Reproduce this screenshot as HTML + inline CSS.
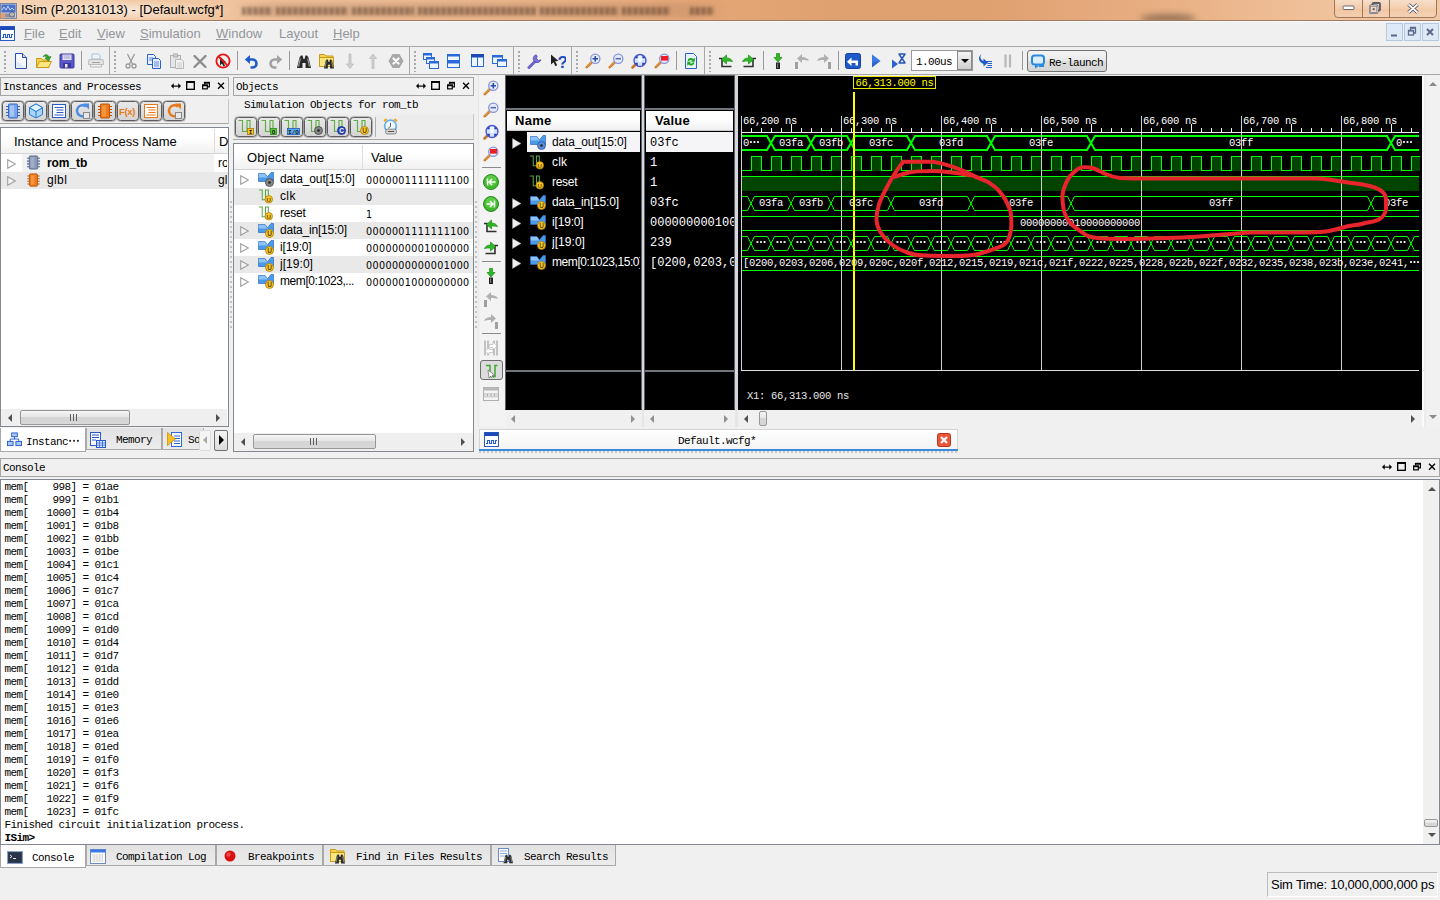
<!DOCTYPE html><html><head><meta charset="utf-8"><title>ISim</title><style>
*{box-sizing:border-box}
html,body{margin:0;padding:0}
body{width:1440px;height:900px;position:relative;overflow:hidden;background:#f0f0f0;font-family:"Liberation Sans",sans-serif;font-size:13px;color:#000;line-height:16px}
.a{position:absolute}
.sim{font-family:"Liberation Mono","Noto Sans CJK SC",monospace;font-size:11px;letter-spacing:-0.6px;white-space:pre;line-height:12px}
.ui{font-family:"Liberation Sans",sans-serif;font-size:13px;white-space:pre;line-height:16px}
.box{border:1px solid #a5a5a5;background:#f0f0f0}
.wh{background:#fff;border:1px solid #828790}
.menu span{position:absolute;top:4px;color:#93969b;font-size:13px}
.tb{width:22px;height:20px;border:1px solid #5c5c5c;border-radius:3.5px;background:linear-gradient(#e8e8e8,#d4d4d4);box-shadow:0 0 0 .6px #8a8a8a}
.alt{background:#e9e9e9}
.hdr{background:linear-gradient(#ffffff 40%,#f1f1f1);border-bottom:1px solid #d5d5d5}
.thumb{border:1px solid #979797;border-radius:2px;background:linear-gradient(#f5f5f5,#e6e6e6 45%,#d4d4d4 50%,#d8d8d8)}
.tab{border:1px solid #a9a9a9;border-top:none;background:linear-gradient(#e2e2e2,#ececec);height:21px}
.tabsel{background:#fff;border:1px solid #a9a9a9;border-top:none;height:23px}
.wn{color:#fff;font-size:13px;white-space:pre;line-height:16px}
.wv{color:#fff;font-family:"Liberation Mono",monospace;font-size:12px;white-space:pre;overflow:hidden;line-height:14px}
.sep{width:1px;background:#9a9a9a}
.hd{width:2px;height:21px;background-image:repeating-linear-gradient(#a8a8a8 0 2px,transparent 2px 4px)}
.ar{width:0;height:0}
.el{font-family:'WenQuanYi Zen Hei','Noto Sans CJK SC',sans-serif;letter-spacing:0;font-size:12px;-webkit-text-stroke:.4px #000}
</style></head><body>
<div class="a" style="left:0;top:0;width:1440px;height:21px;background:linear-gradient(90deg,#f4d3b4 0%,#f1c7a2 12%,#ecb88e 35%,#e5a676 50%,#dfa070 60%,#e1a272 70%,#e9b186 82%,#f0c29c 92%,#f2c9a6 100%)"></div>
<div class="a" style="left:0;top:20px;width:1440px;height:1px;background:#a07a60"></div><div class="a" style="left:0;top:21px;width:1440px;height:1px;background:#fbfbfb"></div>
<div class="a" style="left:230px;top:2px;width:500px;height:16px;background:linear-gradient(90deg,rgba(160,110,80,0),rgba(170,120,90,.25) 8%,rgba(170,120,90,.28) 92%,rgba(160,110,80,0));filter:blur(2px)"></div>
<div class="a" style="left:242px;top:7px;width:30px;height:8px;background:repeating-linear-gradient(90deg,rgba(70,45,30,.5) 0 3px,rgba(70,45,30,.22) 3px 6px);filter:blur(1.4px)"></div>
<div class="a" style="left:276px;top:7px;width:72px;height:8px;background:repeating-linear-gradient(90deg,rgba(70,45,30,.5) 0 3px,rgba(70,45,30,.22) 3px 6px);filter:blur(1.4px)"></div>
<div class="a" style="left:352px;top:7px;width:62px;height:8px;background:repeating-linear-gradient(90deg,rgba(70,45,30,.5) 0 3px,rgba(70,45,30,.22) 3px 6px);filter:blur(1.4px)"></div>
<div class="a" style="left:418px;top:7px;width:118px;height:8px;background:repeating-linear-gradient(90deg,rgba(70,45,30,.5) 0 3px,rgba(70,45,30,.22) 3px 6px);filter:blur(1.4px)"></div>
<div class="a" style="left:540px;top:7px;width:78px;height:8px;background:repeating-linear-gradient(90deg,rgba(70,45,30,.5) 0 3px,rgba(70,45,30,.22) 3px 6px);filter:blur(1.4px)"></div>
<div class="a" style="left:622px;top:7px;width:48px;height:8px;background:repeating-linear-gradient(90deg,rgba(70,45,30,.5) 0 3px,rgba(70,45,30,.22) 3px 6px);filter:blur(1.4px)"></div>
<div class="a" style="left:690px;top:7px;width:24px;height:8px;background:repeating-linear-gradient(90deg,rgba(70,45,30,.5) 0 3px,rgba(70,45,30,.22) 3px 6px);filter:blur(1.4px)"></div>
<div class="a" style="left:14px;top:1px;width:216px;height:19px;background:radial-gradient(ellipse at center,rgba(255,255,255,.55),rgba(255,255,255,0) 75%)"></div>
<svg class="a" style="left:0px;top:2px" width="17" height="17" viewBox="0 0 17 17"><rect x="0.5" y="1.5" width="16" height="15" fill="#c8d0e0" stroke="#7a86a0"/><rect x="1.5" y="2.5" width="14" height="8" fill="#4a70c8"/><path d="M2,8l2,-3 2,3 2,-4 2,4 2,-2 2,2" fill="none" stroke="#cfe0ff" stroke-width=".9"/><rect x="2" y="11.5" width="13" height="4" fill="#8890a8"/><circle cx="12" cy="12.5" r="2.5" fill="#b8b8c0" stroke="#555" stroke-width=".7"/><rect x="0.5" y="11" width="5" height="5.5" fill="#e8a070" opacity=".9"/></svg>
<div class="a ui" id="title" style="left:21px;top:2px;font-size:13px;letter-spacing:0.01px;">ISim (P.20131013) - [Default.wcfg*]</div>
<div class="a" style="left:1140px;top:14px;width:56px;height:9px;border-radius:50%;background:rgba(90,70,55,.55);filter:blur(3px)"></div>
<div class="a" style="left:0;top:20px;width:1440px;height:2px;background:#f0f0f0"></div><div class="a" style="left:0;top:20px;width:1440px;height:1px;background:#a07a60"></div><div class="a" style="left:0;top:21px;width:1440px;height:1px;background:#fbfbfb"></div>
<div class="a" style="left:1334px;top:-1px;width:103px;height:19px;border:1px solid #a07558;border-radius:0 0 4px 4px;background:linear-gradient(rgba(255,255,255,.42),rgba(255,255,255,.12) 50%,rgba(255,255,255,.02) 52%,rgba(255,255,255,.2))"></div>
<div class="a" style="left:1362px;top:0;width:1px;height:17px;background:#a07558"></div><div class="a" style="left:1389px;top:0;width:1px;height:17px;background:#a07558"></div>
<svg class="a" style="left:1342px;top:5px" width="14" height="8" viewBox="0 0 14 8"><rect x="1" y="1" width="11" height="3.5" rx="1" fill="#fff" stroke="#5a5a6a" stroke-width=".9"/></svg>
<svg class="a" style="left:1369px;top:2px" width="13" height="13" viewBox="0 0 13 13"><rect x="3.5" y="1" width="7.5" height="7.5" rx="1" fill="none" stroke="#5a5a6a" stroke-width="1.8"/><rect x="1" y="3.5" width="7.5" height="7.5" rx="1" fill="#f4d8c0" stroke="#5a5a6a" stroke-width="1.8"/><rect x="1" y="3.5" width="7.5" height="7.5" rx="1" fill="none" stroke="#fff" stroke-width=".6"/><rect x="3.7" y="6.2" width="2" height="2" fill="#5a5a6a"/></svg>
<svg class="a" style="left:1407px;top:3px" width="12" height="11" viewBox="0 0 12 11"><path d="M1.5,1.5l9,8M10.5,1.5l-9,8" stroke="#4a4a5a" stroke-width="3.4"/><path d="M1.5,1.5l9,8M10.5,1.5l-9,8" stroke="#fff" stroke-width="1.7"/></svg>
<div class="a menu" style="left:0;top:22px;width:1440px;height:24px;background:#f0f0f0">
<span style="left:24px"><u>F</u>ile</span>
<span style="left:59px"><u>E</u>dit</span>
<span style="left:97px"><u>V</u>iew</span>
<span style="left:140px"><u>S</u>imulation</span>
<span style="left:216px"><u>W</u>indow</span>
<span style="left:279px">La<u>y</u>out</span>
<span style="left:333px"><u>H</u>elp</span>
</div>
<svg class="a" style="left:0px;top:26px" width="15" height="15" viewBox="0 0 15 15"><rect x="0.5" y="0.5" width="14" height="14" fill="#fff" stroke="#2a5ac8"/><rect x="0.5" y="0.5" width="14" height="3.5" fill="#1e4ab8"/><path d="M2,11.5h1.5v-3h2v3h2v-3h2v3h2v-3h1.5" fill="none" stroke="#2a5ac8" stroke-width="1.1"/></svg>
<div class="a" style="left:1386px;top:23px;width:17px;height:18px;background:#dde9f7;border:1px solid #b4c8e0"></div>
<svg class="a" style="left:1386px;top:24px" width="16" height="16" viewBox="0 0 16 16"><path d="M5,11.5h6" stroke="#5a6a88" stroke-width="2"/></svg>
<div class="a" style="left:1404px;top:23px;width:17px;height:18px;background:#dde9f7;border:1px solid #b4c8e0"></div>
<svg class="a" style="left:1404px;top:24px" width="16" height="16" viewBox="0 0 16 16"><path d="M6.5,6v-2h5v5h-2" fill="none" stroke="#5a6a88" stroke-width="1.3"/><path d="M6,3.5h6" stroke="#5a6a88" stroke-width="1.5"/><rect x="4.5" y="6.8" width="5" height="4.2" fill="none" stroke="#5a6a88" stroke-width="1.3"/><path d="M4,6.5h6" stroke="#5a6a88" stroke-width="1.5"/></svg>
<div class="a" style="left:1422px;top:23px;width:17px;height:18px;background:#dde9f7;border:1px solid #b4c8e0"></div>
<svg class="a" style="left:1422px;top:24px" width="16" height="16" viewBox="0 0 16 16"><path d="M5,5l6,6M11,5l-6,6" stroke="#5a6a88" stroke-width="2"/></svg>
<div class="a" style="left:0;top:46px;width:1440px;height:1px;background:#a8a8a8"></div>
<div class="a" style="left:0;top:74px;width:1440px;height:1px;background:#a8a8a8"></div>
<div class="a" style="left:109px;top:47px;width:1px;height:27px;background:#a8a8a8"></div>
<div class="a" style="left:409px;top:47px;width:1px;height:27px;background:#a8a8a8"></div>
<div class="a" style="left:513px;top:47px;width:1px;height:27px;background:#a8a8a8"></div>
<div class="a" style="left:571px;top:47px;width:1px;height:27px;background:#a8a8a8"></div>
<div class="a" style="left:704px;top:47px;width:1px;height:27px;background:#a8a8a8"></div>
<div class="a hd" style="left:4px;top:51px"></div>
<div class="a hd" style="left:114px;top:51px"></div>
<div class="a hd" style="left:414px;top:51px"></div>
<div class="a hd" style="left:518px;top:51px"></div>
<div class="a hd" style="left:576px;top:51px"></div>
<div class="a hd" style="left:709px;top:51px"></div>
<div class="a sep" style="left:81px;top:51px;height:19px"></div>
<div class="a sep" style="left:237px;top:51px;height:19px"></div>
<div class="a sep" style="left:289px;top:51px;height:19px"></div>
<div class="a sep" style="left:676px;top:51px;height:19px"></div>
<div class="a sep" style="left:763px;top:51px;height:19px"></div>
<div class="a sep" style="left:838px;top:51px;height:19px"></div>
<div class="a sep" style="left:1022px;top:51px;height:19px"></div>
<svg class="a" style="left:13px;top:53px" width="16" height="16" viewBox="0 0 16 16"><path d="M2.5,0.5h7l4,4v11h-11z" fill="#f4f8ff" stroke="#2a4db0"/><path d="M9.5,0.5v4h4" fill="#c8d8f8" stroke="#2a4db0"/><path d="M3.5,8L12.5,14.5H3.5z" fill="#d6e4fb" opacity=".8"/></svg>
<svg class="a" style="left:36px;top:53px" width="16" height="16" viewBox="0 0 16 16"><path d="M0.5,14.5V5.5h5l1.5,1.5h6v7.5z" fill="#f7d54a" stroke="#c79a18"/><path d="M0.5,14.5l3,-6h12l-3,6z" fill="#fbe680" stroke="#c79a18"/><path d="M7,3.5C9,1 12,1 13,4l2,-.5-2.5,4.5-3.5,-3 2,-.4C10.5,3 9,3 7,3.5z" fill="#2fa825" stroke="#1b7a16" stroke-width=".6"/></svg>
<svg class="a" style="left:59px;top:53px" width="16" height="16" viewBox="0 0 16 16"><rect x="1" y="1" width="14" height="14" rx="1" fill="#5a58c8" stroke="#3a389a"/><rect x="3.5" y="1.5" width="9" height="5.5" fill="#e8e8f8"/><path d="M4.5,3h7M4.5,5h7" stroke="#9a9ad0"/><rect x="4" y="10" width="8" height="5" fill="#3a389a"/><rect x="6" y="11" width="2.5" height="3.5" fill="#e8e8f8"/></svg>
<svg class="a" style="left:88px;top:53px" width="16" height="16" viewBox="0 0 16 16"><g opacity=".75"><path d="M4,6V1h6.5l1.5,1.5V6z" fill="#eef4ff" stroke="#9ab0d8"/><path d="M1,6.5h14l.5,5h-15z" fill="#e0e0e0" stroke="#a8a8a8"/><path d="M2.5,11.5h11v2.5h-11z" fill="#f4f4f4" stroke="#a8a8a8"/><path d="M4,9.5h8" stroke="#888"/></g></svg>
<svg class="a" style="left:123px;top:53px" width="16" height="16" viewBox="0 0 16 16"><g fill="none" stroke="#9a9a9a" stroke-width="1.3"><path d="M4.5,1L9.5,11M11.5,1L6.5,11"/><circle cx="5" cy="13" r="2"/><circle cx="11" cy="13" r="2"/></g></svg>
<svg class="a" style="left:146px;top:53px" width="16" height="16" viewBox="0 0 16 16"><path d="M1.5,1.5h6l2,2v8h-8z" fill="#e8f0ff" stroke="#2a62c8"/><path d="M3,5h4M3,7h4" stroke="#5a8ae0"/><path d="M6.5,5.5h6l2,2v8h-8z" fill="#e8f0ff" stroke="#2a62c8"/><path d="M8,9h5M8,11h5M8,13h5" stroke="#5a8ae0"/></svg>
<svg class="a" style="left:169px;top:53px" width="16" height="16" viewBox="0 0 16 16"><g opacity=".8"><rect x="1.5" y="2.5" width="10" height="12" fill="#e4e4e4" stroke="#a0a0a0"/><rect x="4.5" y="1" width="4" height="3" fill="#c8c8c8" stroke="#a0a0a0"/><path d="M6.5,6.5h6l2,2v7h-8z" fill="#f6f6f6" stroke="#a8a8a8"/><path d="M8,10h5M8,12h5M8,14h5" stroke="#c0c0c0"/></g></svg>
<svg class="a" style="left:192px;top:53px" width="16" height="16" viewBox="0 0 16 16"><path d="M2.5,3L13.5,14M13.5,3L2.5,14" stroke="#8c8c8c" stroke-width="2.4" stroke-linecap="round"/></svg>
<svg class="a" style="left:215px;top:53px" width="16" height="16" viewBox="0 0 16 16"><path d="M5,3.5l6.5,6-3,.3 1.5,3-1.5,.8-1.5,-3-2,2z" fill="#222"/><circle cx="8" cy="8" r="6.6" fill="none" stroke="#e81818" stroke-width="1.9"/><path d="M3.4,3.4L12.6,12.6" stroke="#e81818" stroke-width="1.9"/></svg>
<svg class="a" style="left:244px;top:53px" width="16" height="16" viewBox="0 0 16 16"><path d="M3,6.5h5.5a4,4 0 0 1 0,8h-2" fill="none" stroke="#1e5ac8" stroke-width="2.6"/><path d="M0.8,6.5L6,2v9z" fill="#1e5ac8"/></svg>
<svg class="a" style="left:267px;top:53px" width="16" height="16" viewBox="0 0 16 16"><path d="M13,6.5h-5.5a4,4 0 0 0 0,8h2" fill="none" stroke="#a0a0a0" stroke-width="2.6"/><path d="M15.2,6.5L10,2v9z" fill="#a0a0a0"/></svg>
<svg class="a" style="left:296px;top:53px" width="16" height="16" viewBox="0 0 16 16"><g transform="translate(0,0) scale(1.0)"><path d="M1,15L3.5,4.5 5,2.5h1.5L7.5,6h1L9.5,2.5H11L12.5,4.5 15,15H9.5V10h-3v5z" fill="#2a2a2a"/><path d="M2.5,13.5L4.3,5.5M13.5,13.5L11.7,5.5" stroke="#9a9a9a" stroke-width="1.2"/></g></svg>
<svg class="a" style="left:319px;top:53px" width="16" height="16" viewBox="0 0 16 16"><path d="M0.5,13.5V1.5h5l1.5,1.5h7v10.5z" fill="#f7d54a" stroke="#c79a18"/><path d="M0.5,13.5V4.5h14v9z" fill="#fbe680" stroke="#c79a18"/><g transform="translate(4.2,4.6) scale(0.72)"><path d="M1,15L3.5,4.5 5,2.5h1.5L7.5,6h1L9.5,2.5H11L12.5,4.5 15,15H9.5V10h-3v5z" fill="#2a2a2a"/><path d="M2.5,13.5L4.3,5.5M13.5,13.5L11.7,5.5" stroke="#9a9a9a" stroke-width="1.2"/></g></svg>
<svg class="a" style="left:342px;top:53px" width="16" height="16" viewBox="0 0 16 16"><path d="M7,1h2v10h2.5l-3.5,4.5-3.5,-4.5h2.5z" fill="#cfcfcf" stroke="#b8b8b8" stroke-width=".7"/></svg>
<svg class="a" style="left:365px;top:53px" width="16" height="16" viewBox="0 0 16 16"><path d="M7,15.5h2v-10h2.5l-3.5,-4.5-3.5,4.5h2.5z" fill="#cfcfcf" stroke="#b8b8b8" stroke-width=".7"/></svg>
<svg class="a" style="left:388px;top:53px" width="16" height="16" viewBox="0 0 16 16"><path d="M4.5,1h7l4,7-4,7h-7l-4,-7z" fill="#a8a8a8"/><path d="M5.5,5.5l5,5M10.5,5.5l-5,5" stroke="#fff" stroke-width="2.2" stroke-linecap="round"/></svg>
<svg class="a" style="left:423px;top:53px" width="16" height="16" viewBox="0 0 16 16"><rect x="0.5" y="0.5" width="8" height="6" fill="#eef6ff" stroke="#2a6ad8"/><rect x="0.5" y="0.5" width="8" height="2" fill="#2a6ad8"/><rect x="3.5" y="4.5" width="8" height="6" fill="#eef6ff" stroke="#2a6ad8"/><rect x="3.5" y="4.5" width="8" height="2" fill="#2a6ad8"/><rect x="6.5" y="8.5" width="9" height="7" fill="#eef6ff" stroke="#2a6ad8"/><rect x="6.5" y="8.5" width="9" height="2" fill="#2a6ad8"/></svg>
<svg class="a" style="left:446px;top:53px" width="16" height="16" viewBox="0 0 16 16"><rect x="1.5" y="1.5" width="12" height="6" fill="#eef6ff" stroke="#2a6ad8"/><rect x="1.5" y="1.5" width="12" height="2" fill="#2a6ad8"/><rect x="1.5" y="8.5" width="12" height="6" fill="#eef6ff" stroke="#2a6ad8"/><rect x="1.5" y="8.5" width="12" height="2" fill="#2a6ad8"/></svg>
<svg class="a" style="left:470px;top:53px" width="16" height="16" viewBox="0 0 16 16"><rect x="1.5" y="1.5" width="12" height="12" fill="#eef6ff" stroke="#2a6ad8"/><rect x="1.5" y="1.5" width="12" height="2.5" fill="#1e4ab8" stroke="#1e4ab8"/><path d="M7.5,4v9.5" stroke="#2a6ad8"/></svg>
<svg class="a" style="left:492px;top:53px" width="16" height="16" viewBox="0 0 16 16"><rect x="0.5" y="2.5" width="10" height="8" fill="#eef6ff" stroke="#2a6ad8"/><rect x="0.5" y="2.5" width="10" height="2" fill="#2a6ad8"/><rect x="5.5" y="6.5" width="9" height="7" fill="#eef6ff" stroke="#2a6ad8"/><rect x="5.5" y="6.5" width="9" height="2" fill="#2a6ad8"/></svg>
<svg class="a" style="left:527px;top:53px" width="16" height="16" viewBox="0 0 16 16"><path d="M2,14.5L9,7.5" stroke="#6a62c8" stroke-width="3" stroke-linecap="round"/><path d="M9,1.8a4,4 0 1 0 5,5l-2.5,.7-2,-2 .7,-2.6z" fill="#7a72d8" stroke="#4a42a8" stroke-width=".7"/></svg>
<svg class="a" style="left:550px;top:53px" width="16" height="16" viewBox="0 0 16 16"><path d="M1,1.5l7.5,6.5-3.3,.3 2,4-1.7,.9-2,-4-2.5,2.3z" fill="#222"/><text x="7.6" y="15" font-family="Liberation Sans,sans-serif" font-weight="bold" font-size="17" fill="#1c4cc0">?</text></svg>
<svg class="a" style="left:585px;top:53px" width="16" height="16" viewBox="0 0 16 16"><path d="M1.8,14.2L7,9" stroke="#c9772a" stroke-width="2.6" stroke-linecap="round"/><path d="M2,13.6L6.6,9" stroke="#f0b060" stroke-width="1" stroke-linecap="round"/><circle cx="10.3" cy="5.7" r="4.6" fill="#e4ecfc" stroke="#8a93d8" stroke-width="1.3"/><path d="M7.6,5.7h5.4M10.3,3v5.4" stroke="#2848a8" stroke-width="1.5"/></svg>
<svg class="a" style="left:608px;top:53px" width="16" height="16" viewBox="0 0 16 16"><path d="M1.8,14.2L7,9" stroke="#c9772a" stroke-width="2.6" stroke-linecap="round"/><path d="M2,13.6L6.6,9" stroke="#f0b060" stroke-width="1" stroke-linecap="round"/><circle cx="10.3" cy="5.7" r="4.6" fill="#e4ecfc" stroke="#8a93d8" stroke-width="1.3"/><path d="M7.6,5.7h5.4" stroke="#5a6cb0" stroke-width="1.6"/></svg>
<svg class="a" style="left:631px;top:53px" width="16" height="16" viewBox="0 0 16 16"><path d="M1.5,14.5L4.5,11.5" stroke="#c9772a" stroke-width="2.6" stroke-linecap="round"/><circle cx="9" cy="7.5" r="6" fill="#2a3cb4"/><path d="M9,2V13M3.5,7.5H14.5" stroke="#cfe4fb" stroke-width="4.4"/><path d="M9,2.2V7.5" stroke="#eaf4ff" stroke-width="4.4"/><rect x="7.6" y="6.1" width="2.8" height="2.8" fill="#fff"/><circle cx="9" cy="7.5" r="6" fill="none" stroke="#5058d0" stroke-width="1.3"/></svg>
<svg class="a" style="left:654px;top:53px" width="16" height="16" viewBox="0 0 16 16"><path d="M1.8,14.2L7,9" stroke="#c9772a" stroke-width="2.6" stroke-linecap="round"/><path d="M2,13.6L6.6,9" stroke="#f0b060" stroke-width="1" stroke-linecap="round"/><circle cx="10.3" cy="5.7" r="4.6" fill="#e4ecfc" stroke="#8a93d8" stroke-width="1.3"/><rect x="7" y="3" width="7" height="4.6" fill="#ee1c24"/></svg>
<svg class="a" style="left:683px;top:53px" width="16" height="16" viewBox="0 0 16 16"><path d="M2.5,0.5h8l3,3v12h-11z" fill="#eaf2ff" stroke="#2a62c8"/><path d="M4.5,8a3.5,3.5 0 0 1 6,-2l1.3,-1.2v4h-4l1.3,-1.3a2,2 0 0 0-3,.8z" fill="#1eaa1e"/><path d="M11.5,9.5a3.5,3.5 0 0 1-6,2l-1.3,1.2v-4h4l-1.3,1.3a2,2 0 0 0 3,-.8z" fill="#1eaa1e"/></svg>
<svg class="a" style="left:718px;top:53px" width="16" height="16" viewBox="0 0 16 16"><path d="M1,5.5h3v8h9.5" fill="none" stroke="#303030" stroke-width="1.6"/><path d="M14.5,8.5c-1,-2.5-3.5,-3.5-6,-3.5v-3l-5,4.5 5,4.5v-3c2,0 4,0 6,.5z" fill="#2fb825" stroke="#1b8a16" stroke-width=".7"/></svg>
<svg class="a" style="left:741px;top:53px" width="16" height="16" viewBox="0 0 16 16"><path d="M15,5.5h-3v8H2.5" fill="none" stroke="#303030" stroke-width="1.6"/><path d="M1.5,8.5c1,-2.5 3.5,-3.5 6,-3.5v-3l5,4.5-5,4.5v-3c-2,0-4,0-6,.5z" fill="#2fb825" stroke="#1b8a16" stroke-width=".7"/></svg>
<svg class="a" style="left:770px;top:53px" width="16" height="16" viewBox="0 0 16 16"><path d="M6.5,0.5h3v4h2.5l-4,4.5-4,-4.5h2.5z" fill="#2fb825" stroke="#1b8a16" stroke-width=".7"/><rect x="6" y="9.5" width="4" height="6.5" fill="#222"/><rect x="7" y="10.5" width="1.2" height="4.5" fill="#777"/></svg>
<svg class="a" style="left:794px;top:53px" width="16" height="16" viewBox="0 0 16 16"><rect x="1" y="9" width="3" height="7" fill="#a0a0a0"/><path d="M15,8c-1,-3-4,-4-7,-4v-3l-5,4.5 5,4.5v-3c3,0 5,0 7,1z" fill="#b0b0b0"/></svg>
<svg class="a" style="left:816px;top:53px" width="16" height="16" viewBox="0 0 16 16"><rect x="12" y="9" width="3" height="7" fill="#a0a0a0"/><path d="M1,8c1,-3 4,-4 7,-4v-3l5,4.5-5,4.5v-3c-3,0-5,0-7,1z" fill="#b0b0b0"/></svg>
<svg class="a" style="left:845px;top:53px" width="16" height="16" viewBox="0 0 16 16"><rect x="0.5" y="0.5" width="15" height="15" rx="2" fill="#1e5ac8" stroke="#16409a"/><path d="M13,12.5v-5h-6.5v-3l-4.5,4.3 4.5,4.3v-3h4v2.4z" fill="#fff"/></svg>
<svg class="a" style="left:868px;top:53px" width="16" height="16" viewBox="0 0 16 16"><path d="M4,1.5l8.5,6.5-8.5,6.5z" fill="#2a62d0"/><path d="M4,1.5l8.5,6.5-8.5,2z" fill="#4a8af0" opacity=".6"/></svg>
<svg class="a" style="left:891px;top:53px" width="16" height="16" viewBox="0 0 16 16"><path d="M1,6.5l6,4.5-6,4.5z" fill="#2a62d0"/><path d="M7.5,1h7M7.5,10h7M8,1.3l6,8.4M14,1.3l-6,8.4" stroke="#2a52b8" stroke-width="1.5" fill="none"/></svg>
<svg class="a" style="left:977px;top:53px" width="16" height="16" viewBox="0 0 16 16"><path d="M4.5,1c-4,3-3,8 2,10v2.5l4.5,-4-4.5,-4v2.5c-3,-1.5-4,-4-2,-7z" fill="#1e5ac8"/><path d="M9,8.5h6M10.5,10.5h4.5M10.5,12.5h4.5M9,14.5h6" stroke="#1e5ac8" stroke-width="1.1"/></svg>
<svg class="a" style="left:1000px;top:53px" width="16" height="16" viewBox="0 0 16 16"><path d="M5.5,1.5v13M10,1.5v13" stroke="#b8b8b8" stroke-width="2.2"/></svg>
<div class="a" style="left:911px;top:50px;width:62px;height:21px;background:#fff;border:1px solid #9a9a9a"></div>
<div class="a" style="left:957px;top:51px;width:15px;height:19px;border:1px solid #8a8a8a;background:linear-gradient(#f4f4f4,#cfcfcf)"></div>
<div class="a ar" style="left:960.5px;top:59.0px;border-top:4px solid #000;border-left:4px solid transparent;border-right:4px solid transparent"></div>
<div class="a sim" style="left:916px;top:56px;">1.00us</div>
<div class="a" style="left:1027px;top:50px;width:80px;height:22px;border:1px solid #707070;border-radius:3px;background:linear-gradient(#f4f4f4,#e9e9e9 48%,#dcdcdc 52%,#d6d6d6)"></div>
<svg class="a" style="left:1031px;top:54px" width="16" height="16" viewBox="0 0 16 16"><rect x="1" y="1.5" width="12" height="9" rx="2.5" fill="#dbeeff" stroke="#2a8ae0" stroke-width="2"/><path d="M4,10.5v4l4,-2.5z" fill="#2a8ae0"/><path d="M8,12h4v-2" fill="none" stroke="#2a8ae0" stroke-width="2"/></svg>
<div class="a sim" style="left:1049px;top:57px;">Re-launch</div>
<div class="a box" style="left:0;top:77px;width:229px;height:19px"></div>
<div class="a sim" style="left:3px;top:81px;">Instances and Processes</div>
<svg class="a" style="left:171px;top:81.5px" width="10" height="8.2" viewBox="0 0 11 9"><path d="M1,4.5h9" stroke="#000" stroke-width="1.3"/><path d="M0,4.5l3,-3v6zM11,4.5l-3,-3v6z" fill="#000"/></svg>
<svg class="a" style="left:186px;top:81px" width="9" height="9" viewBox="0 0 10 10"><rect x="0.750" y="1.250" width="8.5" height="8" fill="none" stroke="#000" stroke-width="1.5"/><path d="M0,1h10" stroke="#000" stroke-width="2"/></svg>
<svg class="a" style="left:202px;top:81px" width="8" height="9" viewBox="0 0 10 10"><path d="M3.2,3.5v-2h6v5.2h-2.2" fill="none" stroke="#000" stroke-width="1.5"/><path d="M2.4,1.5h7.6" stroke="#000" stroke-width="2.2"/><rect x="0.8" y="4.6" width="5.8" height="4.6" fill="#f0f0f0" stroke="#000" stroke-width="1.5"/><path d="M0,4.8h7.4" stroke="#000" stroke-width="2.2"/></svg>
<svg class="a" style="left:217px;top:82px" width="8" height="7.5" viewBox="0 0 9.5 9.5"><path d="M1,1l7.5,7.5M8.5,1l-7.5,7.5" stroke="#000" stroke-width="1.7"/></svg>
<div class="a" style="left:0;top:99px;width:229px;height:25px;border-bottom:1px solid #a8a8a8;border-right:1px solid #c8c8c8;background:#f0f0f0"></div>
<div class="a tb" style="left:2px;top:101px"></div>
<svg class="a" style="left:5px;top:103px" width="16" height="16" viewBox="0 0 16 16"><rect x="3.5" y="1" width="9" height="14" rx="1" fill="#78a8ec" stroke="#3a68c4"/><rect x="5" y="2.5" width="4" height="11" fill="#d4e6ff" opacity=".5"/><path d="M1,3.5h2.5M12.5,3.5h2.5" stroke="#3a68c4" stroke-width="1.2"/><path d="M1,6.5h2.5M12.5,6.5h2.5" stroke="#3a68c4" stroke-width="1.2"/><path d="M1,9.5h2.5M12.5,9.5h2.5" stroke="#3a68c4" stroke-width="1.2"/><path d="M1,12.5h2.5M12.5,12.5h2.5" stroke="#3a68c4" stroke-width="1.2"/></svg>
<div class="a tb" style="left:25px;top:101px"></div>
<svg class="a" style="left:28px;top:103px" width="16" height="16" viewBox="0 0 16 16"><path d="M8,1l6.5,3.5v7L8,15 1.5,11.5v-7z" fill="#a8d4f8" stroke="#2a7ad0"/><path d="M8,8.5v6.5M1.5,4.5l6.5,4 6.5,-4" fill="none" stroke="#2a7ad0"/><path d="M8,1l6.5,3.5-6.5,4-6.5,-4z" fill="#e0f2ff" stroke="#2a7ad0"/></svg>
<div class="a tb" style="left:48px;top:101px"></div>
<svg class="a" style="left:51px;top:103px" width="16" height="16" viewBox="0 0 16 16"><rect x="1.5" y="1.5" width="13" height="13" fill="#fff" stroke="#2a5ac8"/><path d="M3.5,4.5h9M5.5,7h7M5.5,9.5h7M3.5,12h9" stroke="#2a5ac8" stroke-width="1.2"/></svg>
<div class="a tb" style="left:71px;top:101px"></div>
<svg class="a" style="left:74px;top:103px" width="16" height="16" viewBox="0 0 16 16"><path d="M12,3.5a5.5,5.5 0 1 0 1.5,6.5" fill="none" stroke="#4a8ae0" stroke-width="2.4"/><path d="M9,0.5h6v6z" fill="#4a8ae0"/><rect x="9.5" y="9.5" width="6" height="6" fill="#e8e8e8" stroke="#888"/></svg>
<div class="a tb" style="left:94px;top:101px"></div>
<svg class="a" style="left:97px;top:103px" width="16" height="16" viewBox="0 0 16 16"><rect x="3.5" y="1" width="9" height="14" rx="1" fill="#ee7a1c" stroke="#b85408"/><rect x="5" y="2.5" width="4" height="11" fill="#ffb060" opacity=".5"/><path d="M1,3.5h2.5M12.5,3.5h2.5" stroke="#b85408" stroke-width="1.2"/><path d="M1,6.5h2.5M12.5,6.5h2.5" stroke="#b85408" stroke-width="1.2"/><path d="M1,9.5h2.5M12.5,9.5h2.5" stroke="#b85408" stroke-width="1.2"/><path d="M1,12.5h2.5M12.5,12.5h2.5" stroke="#b85408" stroke-width="1.2"/></svg>
<div class="a tb" style="left:117px;top:101px"></div>
<svg class="a" style="left:119px;top:103px" width="19" height="16" viewBox="0 0 19 16"><text x="0" y="12" font-family="Liberation Sans,sans-serif" font-size="9.5" font-weight="bold" fill="#e87818" letter-spacing="-.3">F(x)</text></svg>
<div class="a tb" style="left:140px;top:101px"></div>
<svg class="a" style="left:143px;top:103px" width="16" height="16" viewBox="0 0 16 16"><rect x="1.5" y="1.5" width="13" height="13" fill="#fff" stroke="#e87818"/><path d="M3.5,4.5h9M5.5,7h7M5.5,9.5h7M3.5,12h9" stroke="#e87818" stroke-width="1.2"/></svg>
<div class="a tb" style="left:163px;top:101px"></div>
<svg class="a" style="left:166px;top:103px" width="16" height="16" viewBox="0 0 16 16"><path d="M12,3.5a5.5,5.5 0 1 0 1.5,6.5" fill="none" stroke="#e87818" stroke-width="2.4"/><path d="M9,0.5h6v6z" fill="#e87818"/><rect x="9.5" y="9.5" width="6" height="6" fill="#e8e8e8" stroke="#888"/></svg>
<div class="a wh" style="left:0;top:127px;width:229px;height:300px"></div>
<div class="a hdr" style="left:1px;top:128px;width:227px;height:26px"></div>
<div class="a" style="left:214px;top:129px;width:1px;height:24px;background:#dcdcdc"></div>
<div class="a ui" style="left:14px;top:134px;font-size:13px;letter-spacing:-0.02px;">Instance and Process Name</div>
<div class="a ui" style="left:219px;top:134px;font-size:13px;">D</div>
<div class="a alt" style="left:1px;top:172px;width:227px;height:17px"></div><div class="a" style="left:22px;top:154px;width:192px;height:18px;background:#f2f2f2"></div>
<div class="a ui" style="left:47px;top:155px;font-size:12px;font-weight:bold;letter-spacing:-0.08px;">rom_tb</div>
<div class="a ui" style="left:218px;top:155px;font-size:12px;width:9px;overflow:hidden;">rom</div>
<div class="a ui" style="left:47px;top:172px;font-size:12px;letter-spacing:0.38px;">glbl</div>
<div class="a ui" style="left:218px;top:172px;font-size:12px;width:9px;overflow:hidden;">glbl</div>
<svg class="a" style="left:7px;top:159px" width="9" height="10" viewBox="0 0 9 10"><path d="M0.7,0.7v8.6l7.6,-4.3z" fill="#fff" stroke="#a0a0a0" stroke-width="1.1"/></svg>
<svg class="a" style="left:7px;top:176px" width="9" height="10" viewBox="0 0 9 10"><path d="M0.7,0.7v8.6l7.6,-4.3z" fill="#f4f4f4" stroke="#a0a0a0" stroke-width="1.1"/></svg>
<svg class="a" style="left:26px;top:155px" width="15" height="15" viewBox="0 0 16 16"><rect x="3.5" y="1" width="9" height="14" rx="1" fill="#8898b8" stroke="#5a6a8a"/><rect x="5" y="2.5" width="4" height="11" fill="#b8c4dc" opacity=".5"/><path d="M1,3.5h2.5M12.5,3.5h2.5" stroke="#5a6a8a" stroke-width="1.2"/><path d="M1,6.5h2.5M12.5,6.5h2.5" stroke="#5a6a8a" stroke-width="1.2"/><path d="M1,9.5h2.5M12.5,9.5h2.5" stroke="#5a6a8a" stroke-width="1.2"/><path d="M1,12.5h2.5M12.5,12.5h2.5" stroke="#5a6a8a" stroke-width="1.2"/></svg>
<svg class="a" style="left:26px;top:173px" width="15" height="14" viewBox="0 0 16 16"><rect x="3.5" y="1" width="9" height="14" rx="1" fill="#ee7a1c" stroke="#b85408"/><rect x="5" y="2.5" width="4" height="11" fill="#ffb060" opacity=".5"/><path d="M1,3.5h2.5M12.5,3.5h2.5" stroke="#b85408" stroke-width="1.2"/><path d="M1,6.5h2.5M12.5,6.5h2.5" stroke="#b85408" stroke-width="1.2"/><path d="M1,9.5h2.5M12.5,9.5h2.5" stroke="#b85408" stroke-width="1.2"/><path d="M1,12.5h2.5M12.5,12.5h2.5" stroke="#b85408" stroke-width="1.2"/></svg>
<div class="a" style="left:1px;top:409px;width:226px;height:17px;background:#efefef"></div><div class="a thumb" style="left:20px;top:410px;width:110px;height:15px"></div>
<div class="a ar" style="left:8.0px;top:413.5px;border-right:4px solid #505050;border-top:4px solid transparent;border-bottom:4px solid transparent"></div>
<div class="a ar" style="left:216.0px;top:413.5px;border-left:4px solid #505050;border-top:4px solid transparent;border-bottom:4px solid transparent"></div>
<div class="a" style="left:70px;top:414px;width:8px;height:7px;background-image:repeating-linear-gradient(90deg,#606060 0 1px,transparent 1px 3px)"></div>
<div class="a tab" style="left:86px;top:428px;width:76px;height:22px"></div><div class="a tab" style="left:162px;top:428px;width:42px;height:22px"></div><div class="a tabsel" style="left:0;top:428px;width:86px;height:24px"></div>
<svg class="a" style="left:7px;top:432px" width="15" height="15" viewBox="0 0 16 15"><rect x="5" y="0.5" width="6" height="4" fill="#a8c8f8" stroke="#2a5ac8"/><rect x="0.5" y="9.5" width="6" height="4.5" fill="#a8c8f8" stroke="#2a5ac8"/><rect x="9.5" y="9.5" width="6" height="4.5" fill="#a8c8f8" stroke="#2a5ac8"/><path d="M8,4.5v2.5M3.5,9.5v-2.5h9v2.5" fill="none" stroke="#2a5ac8"/></svg>
<svg class="a" style="left:90px;top:432px" width="16" height="16" viewBox="0 0 16 16"><rect x="0.5" y="0.5" width="10" height="13" fill="#fff" stroke="#2a5ac8"/><path d="M2,3h7M2,5.5h7M2,8h4" stroke="#2a5ac8"/><rect x="6.5" y="8.5" width="9" height="7" fill="#d8e8ff" stroke="#2a5ac8"/><path d="M6.5,11h9M6.5,13.2h9M9.5,8.5v7M12.5,8.5v7" stroke="#2a5ac8" stroke-width=".7"/></svg>
<svg class="a" style="left:167px;top:432px" width="16" height="15" viewBox="0 0 16 15"><rect x="4.5" y="0.5" width="10" height="14" fill="#fff" stroke="#2a6ad8"/><path d="M7,4h6M7,6.5h6M7,9h6M7,11.5h6" stroke="#2a6ad8"/><path d="M0.5,0.5l8,6.5-8,6.5z" fill="#f8c020" stroke="#c08808" stroke-width=".7"/></svg>
<div class="a sim" style="left:26px;top:435px;">Instanc<span class="el" lang="zh-CN">…</span></div>
<div class="a sim" style="left:116px;top:434px;">Memory</div>
<div class="a sim" style="left:188px;top:434px;">So</div>
<div class="a" style="left:199px;top:430px;width:12px;height:21px;background:#f4f4f4;border:1px solid #dcdcdc;border-radius:2px"></div><div class="a" style="left:214px;top:430px;width:14px;height:21px;background:linear-gradient(#f4f4f4,#dcdcdc);border:1px solid #707070;border-radius:2px"></div>
<div class="a ar" style="left:203.0px;top:436px;border-right:4px solid #a8a8a8;border-top:4px solid transparent;border-bottom:4px solid transparent"></div>
<div class="a ar" style="left:218.5px;top:435px;border-left:5px solid #000;border-top:5px solid transparent;border-bottom:5px solid transparent"></div>
<div class="a box" style="left:233px;top:77px;width:241px;height:19px"></div>
<div class="a sim" style="left:236px;top:81px;">Objects</div>
<svg class="a" style="left:416px;top:81.5px" width="10" height="8.2" viewBox="0 0 11 9"><path d="M1,4.5h9" stroke="#000" stroke-width="1.3"/><path d="M0,4.5l3,-3v6zM11,4.5l-3,-3v6z" fill="#000"/></svg>
<svg class="a" style="left:431px;top:81px" width="9" height="9" viewBox="0 0 10 10"><rect x="0.750" y="1.250" width="8.5" height="8" fill="none" stroke="#000" stroke-width="1.5"/><path d="M0,1h10" stroke="#000" stroke-width="2"/></svg>
<svg class="a" style="left:447px;top:81px" width="8" height="9" viewBox="0 0 10 10"><path d="M3.2,3.5v-2h6v5.2h-2.2" fill="none" stroke="#000" stroke-width="1.5"/><path d="M2.4,1.5h7.6" stroke="#000" stroke-width="2.2"/><rect x="0.8" y="4.6" width="5.8" height="4.6" fill="#f0f0f0" stroke="#000" stroke-width="1.5"/><path d="M0,4.8h7.4" stroke="#000" stroke-width="2.2"/></svg>
<svg class="a" style="left:462px;top:82px" width="8" height="7.5" viewBox="0 0 9.5 9.5"><path d="M1,1l7.5,7.5M8.5,1l-7.5,7.5" stroke="#000" stroke-width="1.7"/></svg>
<div class="a sim" style="left:244px;top:99px;">Simulation Objects for rom_tb</div>
<div class="a" style="left:233px;top:114px;width:241px;height:26px;border-bottom:1px solid #a8a8a8;border-right:1px solid #c8c8c8;background:#ededed"></div>
<div class="a tb" style="left:235px;top:117px;height:20px"></div>
<svg class="a" style="left:238px;top:119px" width="16" height="16" viewBox="0 0 16 16"><path d="M0.5,1.5h4v11h4.5v-11h3v8" fill="none" stroke="#62ac48" stroke-width="1.15"/><rect x="9.5" y="9.5" width="6" height="6" fill="#f8c828" stroke="#a87808" stroke-width=".8"/><text x="12.5" y="14.6" text-anchor="middle" font-family="Liberation Mono,monospace" font-size="6" font-weight="bold" fill="#222">I</text></svg>
<div class="a tb" style="left:258px;top:117px;height:20px"></div>
<svg class="a" style="left:261px;top:119px" width="16" height="16" viewBox="0 0 16 16"><path d="M0.5,1.5h4v11h4.5v-11h3v8" fill="none" stroke="#62ac48" stroke-width="1.15"/><rect x="9.5" y="9.5" width="6" height="6" fill="#58c838" stroke="#2a8a1c" stroke-width=".8"/><text x="12.5" y="14.6" text-anchor="middle" font-family="Liberation Mono,monospace" font-size="6" font-weight="bold" fill="#222">O</text></svg>
<div class="a tb" style="left:281px;top:117px;height:20px"></div>
<svg class="a" style="left:284px;top:119px" width="16" height="16" viewBox="0 0 16 16"><path d="M0.5,1.5h4v11h4.5v-11h3v8" fill="none" stroke="#62ac48" stroke-width="1.15"/><rect x="3.5" y="9.5" width="12" height="6" fill="#58a8f0" stroke="#1e5ab8" stroke-width=".8"/><text x="9.5" y="14.6" text-anchor="middle" font-family="Liberation Mono,monospace" font-size="6" font-weight="bold" fill="#222">I/O</text></svg>
<div class="a tb" style="left:304px;top:117px;height:20px"></div>
<svg class="a" style="left:307px;top:119px" width="16" height="16" viewBox="0 0 16 16"><path d="M0.5,1.5h4v11h4.5v-11h3v8" fill="none" stroke="#62ac48" stroke-width="1.15"/><circle cx="11.5" cy="11.5" r="4" fill="#888" stroke="#444" stroke-width=".8"/><circle cx="11.5" cy="11.5" r="1.3" fill="#222"/></svg>
<div class="a tb" style="left:327px;top:117px;height:20px"></div>
<svg class="a" style="left:330px;top:119px" width="16" height="16" viewBox="0 0 16 16"><path d="M0.5,1.5h4v11h4.5v-11h3v8" fill="none" stroke="#62ac48" stroke-width="1.15"/><circle cx="11.5" cy="11.5" r="4" fill="#2848c0" stroke="#142880" stroke-width=".8"/><text x="11.5" y="14" text-anchor="middle" font-family="Liberation Sans,sans-serif" font-size="6.5" font-weight="bold" fill="#fff">C</text></svg>
<div class="a tb" style="left:350px;top:117px;height:20px"></div>
<svg class="a" style="left:353px;top:119px" width="16" height="16" viewBox="0 0 16 16"><path d="M0.5,1.5h4v11h4.5v-11h3v8" fill="none" stroke="#62ac48" stroke-width="1.15"/><circle cx="11.5" cy="11.5" r="4" fill="#f8c828" stroke="#a87808" stroke-width=".8"/><text x="11.5" y="14" text-anchor="middle" font-family="Liberation Sans,sans-serif" font-size="6.5" font-weight="bold" fill="#6a4a00">U</text></svg>
<div class="a sep" style="left:375px;top:117px;height:20px;background:#b0b0b0"></div>
<svg class="a" style="left:382px;top:118px" width="17" height="17" viewBox="0 0 16 16"><circle cx="8" cy="7.5" r="5.5" fill="#eef6ff" stroke="#6ab0e8" stroke-width="1.6"/><path d="M2,3l2.5,-2M14,3l-2.5,-2" stroke="#f0a818" stroke-width="2"/><path d="M8,4.5v3.5l-2,1.5" fill="none" stroke="#555" stroke-width=".9"/><rect x="3.5" y="10.5" width="10" height="4.5" rx="1.5" fill="#d8d8d8" stroke="#777" stroke-width=".8"/><path d="M5.5,12.7h6" stroke="#555"/></svg>
<div class="a wh" style="left:233px;top:143px;width:241px;height:309px"></div>
<div class="a hdr" style="left:234px;top:144px;width:239px;height:26px"></div>
<div class="a" style="left:362px;top:145px;width:1px;height:24px;background:#dcdcdc"></div>
<div class="a ui" style="left:247px;top:150px;font-size:13px;letter-spacing:0.14px;">Object Name</div>
<div class="a ui" style="left:371px;top:150px;font-size:13px;letter-spacing:-0.18px;">Value</div>
<div class="a ui" style="left:280px;top:171px;font-size:12px;letter-spacing:-0.14px;width:82px;overflow:hidden;">data_out[15:0]</div>
<div class="a" style="left:366px;top:173px;font-family:'DejaVu Sans',sans-serif;font-size:9.6px;width:106px;overflow:hidden;white-space:pre;letter-spacing:.37px;line-height:16px">0000001111111100</div>
<svg class="a" style="left:240px;top:175px" width="9" height="10" viewBox="0 0 9 10"><path d="M0.7,0.7v8.6l7.6,-4.3z" fill="#fff" stroke="#a0a0a0" stroke-width="1.1"/></svg>
<svg class="a" style="left:258px;top:171px" width="16" height="16" viewBox="0 0 16 16"><path d="M0.5,2.5h6.5l2.5,3.5 3.5,-4.5h2.5v9h-15z" fill="#4a9ae8" stroke="#2a6ac0" stroke-width=".7"/><path d="M0.8,2.8h6l2.7,3.7-9,0z" fill="#a8d4ff" opacity=".7"/><circle cx="11.5" cy="11.5" r="4" fill="#888" stroke="#444" stroke-width=".8"/><circle cx="11.5" cy="11.5" r="1.3" fill="#222"/></svg>
<div class="a alt" style="left:234px;top:188px;width:239px;height:17px"></div>
<div class="a ui" style="left:280px;top:188px;font-size:12px;letter-spacing:0.36px;width:82px;overflow:hidden;">clk</div>
<div class="a" style="left:366px;top:190px;font-family:'DejaVu Sans',sans-serif;font-size:9.6px;width:106px;overflow:hidden;white-space:pre;letter-spacing:.37px;line-height:16px">0</div>
<svg class="a" style="left:258px;top:188px" width="15" height="16" viewBox="0 0 16 16"><path d="M1,1.5h3.5v10.5h3.5v-10.5h3v7" fill="none" stroke="#5aa844" stroke-width="1.1"/><circle cx="11.5" cy="11.5" r="4" fill="#f8c828" stroke="#a87808" stroke-width=".8"/><text x="11.5" y="14" text-anchor="middle" font-family="Liberation Sans,sans-serif" font-size="6.5" font-weight="bold" fill="#6a4a00">U</text></svg>
<div class="a ui" style="left:280px;top:205px;font-size:12px;letter-spacing:-0.22px;width:82px;overflow:hidden;">reset</div>
<div class="a" style="left:366px;top:207px;font-family:'DejaVu Sans',sans-serif;font-size:9.6px;width:106px;overflow:hidden;white-space:pre;letter-spacing:.37px;line-height:16px">1</div>
<svg class="a" style="left:258px;top:205px" width="15" height="16" viewBox="0 0 16 16"><path d="M1,1.5h3.5v10.5h3.5v-10.5h3v7" fill="none" stroke="#5aa844" stroke-width="1.1"/><circle cx="11.5" cy="11.5" r="4" fill="#f8c828" stroke="#a87808" stroke-width=".8"/><text x="11.5" y="14" text-anchor="middle" font-family="Liberation Sans,sans-serif" font-size="6.5" font-weight="bold" fill="#6a4a00">U</text></svg>
<div class="a alt" style="left:234px;top:222px;width:239px;height:17px"></div>
<div class="a ui" style="left:280px;top:222px;font-size:12px;letter-spacing:-0.20px;width:82px;overflow:hidden;">data_in[15:0]</div>
<div class="a" style="left:366px;top:224px;font-family:'DejaVu Sans',sans-serif;font-size:9.6px;width:106px;overflow:hidden;white-space:pre;letter-spacing:.37px;line-height:16px">0000001111111100</div>
<svg class="a" style="left:240px;top:226px" width="9" height="10" viewBox="0 0 9 10"><path d="M0.7,0.7v8.6l7.6,-4.3z" fill="#f4f4f4" stroke="#a0a0a0" stroke-width="1.1"/></svg>
<svg class="a" style="left:258px;top:222px" width="16" height="16" viewBox="0 0 16 16"><path d="M0.5,2.5h6.5l2.5,3.5 3.5,-4.5h2.5v9h-15z" fill="#4a9ae8" stroke="#2a6ac0" stroke-width=".7"/><path d="M0.8,2.8h6l2.7,3.7-9,0z" fill="#a8d4ff" opacity=".7"/><circle cx="11.5" cy="11.5" r="4" fill="#f8c828" stroke="#a87808" stroke-width=".8"/><text x="11.5" y="14" text-anchor="middle" font-family="Liberation Sans,sans-serif" font-size="6.5" font-weight="bold" fill="#6a4a00">U</text></svg>
<div class="a ui" style="left:280px;top:239px;font-size:12px;letter-spacing:-0.17px;width:82px;overflow:hidden;">i[19:0]</div>
<div class="a" style="left:366px;top:241px;font-family:'DejaVu Sans',sans-serif;font-size:9.6px;width:106px;overflow:hidden;white-space:pre;letter-spacing:.37px;line-height:16px">0000000001000000</div>
<svg class="a" style="left:240px;top:243px" width="9" height="10" viewBox="0 0 9 10"><path d="M0.7,0.7v8.6l7.6,-4.3z" fill="#fff" stroke="#a0a0a0" stroke-width="1.1"/></svg>
<svg class="a" style="left:258px;top:239px" width="16" height="16" viewBox="0 0 16 16"><path d="M0.5,2.5h6.5l2.5,3.5 3.5,-4.5h2.5v9h-15z" fill="#4a9ae8" stroke="#2a6ac0" stroke-width=".7"/><path d="M0.8,2.8h6l2.7,3.7-9,0z" fill="#a8d4ff" opacity=".7"/><circle cx="11.5" cy="11.5" r="4" fill="#f8c828" stroke="#a87808" stroke-width=".8"/><text x="11.5" y="14" text-anchor="middle" font-family="Liberation Sans,sans-serif" font-size="6.5" font-weight="bold" fill="#6a4a00">U</text></svg>
<div class="a alt" style="left:234px;top:256px;width:239px;height:17px"></div>
<div class="a ui" style="left:280px;top:256px;font-size:12px;letter-spacing:0.04px;width:82px;overflow:hidden;">j[19:0]</div>
<div class="a" style="left:366px;top:258px;font-family:'DejaVu Sans',sans-serif;font-size:9.6px;width:106px;overflow:hidden;white-space:pre;letter-spacing:.37px;line-height:16px">0000000000001000</div>
<svg class="a" style="left:240px;top:260px" width="9" height="10" viewBox="0 0 9 10"><path d="M0.7,0.7v8.6l7.6,-4.3z" fill="#f4f4f4" stroke="#a0a0a0" stroke-width="1.1"/></svg>
<svg class="a" style="left:258px;top:256px" width="16" height="16" viewBox="0 0 16 16"><path d="M0.5,2.5h6.5l2.5,3.5 3.5,-4.5h2.5v9h-15z" fill="#4a9ae8" stroke="#2a6ac0" stroke-width=".7"/><path d="M0.8,2.8h6l2.7,3.7-9,0z" fill="#a8d4ff" opacity=".7"/><circle cx="11.5" cy="11.5" r="4" fill="#f8c828" stroke="#a87808" stroke-width=".8"/><text x="11.5" y="14" text-anchor="middle" font-family="Liberation Sans,sans-serif" font-size="6.5" font-weight="bold" fill="#6a4a00">U</text></svg>
<div class="a ui" style="left:280px;top:273px;font-size:12px;letter-spacing:-0.43px;width:82px;overflow:hidden;">mem[0:1023,...</div>
<div class="a" style="left:366px;top:275px;font-family:'DejaVu Sans',sans-serif;font-size:9.6px;width:106px;overflow:hidden;white-space:pre;letter-spacing:.37px;line-height:16px">0000001000000000</div>
<svg class="a" style="left:240px;top:277px" width="9" height="10" viewBox="0 0 9 10"><path d="M0.7,0.7v8.6l7.6,-4.3z" fill="#fff" stroke="#a0a0a0" stroke-width="1.1"/></svg>
<svg class="a" style="left:258px;top:273px" width="16" height="16" viewBox="0 0 16 16"><path d="M0.5,2.5h6.5l2.5,3.5 3.5,-4.5h2.5v9h-15z" fill="#4a9ae8" stroke="#2a6ac0" stroke-width=".7"/><path d="M0.8,2.8h6l2.7,3.7-9,0z" fill="#a8d4ff" opacity=".7"/><circle cx="11.5" cy="11.5" r="4" fill="#f8c828" stroke="#a87808" stroke-width=".8"/><text x="11.5" y="14" text-anchor="middle" font-family="Liberation Sans,sans-serif" font-size="6.5" font-weight="bold" fill="#6a4a00">U</text></svg>
<div class="a" style="left:234px;top:433px;width:239px;height:18px;background:#efefef"></div><div class="a thumb" style="left:253px;top:434px;width:123px;height:15px"></div>
<div class="a ar" style="left:241.0px;top:437.5px;border-right:4px solid #505050;border-top:4px solid transparent;border-bottom:4px solid transparent"></div>
<div class="a ar" style="left:461.0px;top:437.5px;border-left:4px solid #505050;border-top:4px solid transparent;border-bottom:4px solid transparent"></div>
<div class="a" style="left:310px;top:438px;width:8px;height:7px;background-image:repeating-linear-gradient(90deg,#606060 0 1px,transparent 1px 3px)"></div>
<div class="a" style="left:478px;top:75px;width:28px;height:352px;background:#f3f3f3;border-left:1px solid #e4e4e4"></div>
<svg class="a" style="left:483px;top:80px" width="16" height="16" viewBox="0 0 16 16"><path d="M1.8,14.2L7,9" stroke="#c9772a" stroke-width="2.6" stroke-linecap="round"/><path d="M2,13.6L6.6,9" stroke="#f0b060" stroke-width="1" stroke-linecap="round"/><circle cx="10.3" cy="5.7" r="4.6" fill="#e4ecfc" stroke="#8a93d8" stroke-width="1.3"/><path d="M7.6,5.7h5.4M10.3,3v5.4" stroke="#2848a8" stroke-width="1.5"/></svg>
<svg class="a" style="left:483px;top:102px" width="16" height="16" viewBox="0 0 16 16"><path d="M1.8,14.2L7,9" stroke="#c9772a" stroke-width="2.6" stroke-linecap="round"/><path d="M2,13.6L6.6,9" stroke="#f0b060" stroke-width="1" stroke-linecap="round"/><circle cx="10.3" cy="5.7" r="4.6" fill="#e4ecfc" stroke="#8a93d8" stroke-width="1.3"/><path d="M7.6,5.7h5.4" stroke="#5a6cb0" stroke-width="1.6"/></svg>
<svg class="a" style="left:483px;top:124px" width="16" height="16" viewBox="0 0 16 16"><path d="M1.5,14.5L4.5,11.5" stroke="#c9772a" stroke-width="2.6" stroke-linecap="round"/><circle cx="9" cy="7.5" r="6" fill="#2a3cb4"/><path d="M9,2V13M3.5,7.5H14.5" stroke="#cfe4fb" stroke-width="4.4"/><path d="M9,2.2V7.5" stroke="#eaf4ff" stroke-width="4.4"/><rect x="7.6" y="6.1" width="2.8" height="2.8" fill="#fff"/><circle cx="9" cy="7.5" r="6" fill="none" stroke="#5058d0" stroke-width="1.3"/></svg>
<svg class="a" style="left:483px;top:146px" width="16" height="16" viewBox="0 0 16 16"><path d="M1.8,14.2L7,9" stroke="#c9772a" stroke-width="2.6" stroke-linecap="round"/><path d="M2,13.6L6.6,9" stroke="#f0b060" stroke-width="1" stroke-linecap="round"/><circle cx="10.3" cy="5.7" r="4.6" fill="#e4ecfc" stroke="#8a93d8" stroke-width="1.3"/><rect x="7" y="3" width="7" height="4.6" fill="#ee1c24"/></svg>
<svg class="a" style="left:483px;top:174px" width="16" height="16" viewBox="0 0 16 16"><circle cx="8" cy="8" r="7.5" fill="#3fb82e" stroke="#2a8a1c"/><circle cx="8" cy="6.5" r="5.5" fill="#7fe060" opacity=".45"/><path d="M4.5,4.5v7M12.5,8h-6M9,5l-3,3 3,3" fill="none" stroke="#fff" stroke-width="1.4"/></svg>
<svg class="a" style="left:483px;top:196px" width="16" height="16" viewBox="0 0 16 16"><circle cx="8" cy="8" r="7.5" fill="#3fb82e" stroke="#2a8a1c"/><circle cx="8" cy="6.5" r="5.5" fill="#7fe060" opacity=".45"/><path d="M11.5,4.5v7M3.5,8h6M7,5l3,3-3,3" fill="none" stroke="#fff" stroke-width="1.4"/></svg>
<svg class="a" style="left:483px;top:218px" width="16" height="16" viewBox="0 0 16 16"><path d="M1,5.5h3v8h9.5" fill="none" stroke="#303030" stroke-width="1.6"/><path d="M14.5,8.5c-1,-2.5-3.5,-3.5-6,-3.5v-3l-5,4.5 5,4.5v-3c2,0 4,0 6,.5z" fill="#2fb825" stroke="#1b8a16" stroke-width=".7"/></svg>
<svg class="a" style="left:483px;top:240px" width="16" height="16" viewBox="0 0 16 16"><path d="M15,5.5h-3v8H2.5" fill="none" stroke="#303030" stroke-width="1.6"/><path d="M1.5,8.5c1,-2.5 3.5,-3.5 6,-3.5v-3l5,4.5-5,4.5v-3c-2,0-4,0-6,.5z" fill="#2fb825" stroke="#1b8a16" stroke-width=".7"/></svg>
<svg class="a" style="left:483px;top:268px" width="16" height="16" viewBox="0 0 16 16"><path d="M6.5,0.5h3v4h2.5l-4,4.5-4,-4.5h2.5z" fill="#2fb825" stroke="#1b8a16" stroke-width=".7"/><rect x="6" y="9.5" width="4" height="6.5" fill="#222"/><rect x="7" y="10.5" width="1.2" height="4.5" fill="#777"/></svg>
<svg class="a" style="left:483px;top:291px" width="16" height="16" viewBox="0 0 16 16"><rect x="1" y="9" width="3" height="7" fill="#a0a0a0"/><path d="M15,8c-1,-3-4,-4-7,-4v-3l-5,4.5 5,4.5v-3c3,0 5,0 7,1z" fill="#b0b0b0"/></svg>
<svg class="a" style="left:483px;top:313px" width="16" height="16" viewBox="0 0 16 16"><rect x="12" y="9" width="3" height="7" fill="#a0a0a0"/><path d="M1,8c1,-3 4,-4 7,-4v-3l5,4.5-5,4.5v-3c-3,0-5,0-7,1z" fill="#b0b0b0"/></svg>
<svg class="a" style="left:483px;top:340px" width="16" height="16" viewBox="0 0 16 16"><g fill="none" stroke="#a8a8a8" stroke-width="1.3"><path d="M2,0.5v15M5,0.5v15M11,0.5v15M14,0.5v15"/></g><path d="M6,4.5h4v-2.5l4,4-4,4v-2.5h-4z" fill="#fff" stroke="#b0b0b0" stroke-width=".6"/><path d="M10,9.5h-4v-2l-4,3.5 4,3.5v-2h4z" fill="#fff" stroke="#b0b0b0" stroke-width=".6"/></svg>
<svg class="a" style="left:483px;top:386px" width="16" height="16" viewBox="0 0 16 16"><rect x="0.5" y="1.5" width="15" height="13" fill="#f4f4f4" stroke="#b0b0b0"/><rect x="0.5" y="1.5" width="15" height="3" fill="#b8b8b8"/><rect x="1.5" y="7.5" width="13" height="3.5" fill="#e0e0e0" stroke="#c0c0c0" stroke-width=".6"/><path d="M4.5,8v2.5M8,8v2.5M11.5,8v2.5" stroke="#aaa"/></svg>
<div class="a" style="left:482px;top:167px;width:19px;height:1px;background:#8a8a8a"></div>
<div class="a" style="left:482px;top:261px;width:19px;height:1px;background:#8a8a8a"></div>
<div class="a" style="left:482px;top:333px;width:19px;height:1px;background:#8a8a8a"></div>
<div class="a" style="left:480px;top:360px;width:23px;height:20px;border:1px solid #6c6c6c;border-radius:3px;background:#dcdcdc"></div>
<svg class="a" style="left:483px;top:362px" width="16" height="16" viewBox="0 0 16 16"><path d="M3,3.5h4v11h5v-11h2.5" fill="none" stroke="#3fa82e" stroke-width="1.5"/><path d="M5,8l1,8 1.8,-2 1.5,3 1.2,-.6-1.5,-3 2.5,-.3z" fill="#fff" stroke="#555" stroke-width=".6"/></svg>
<div class="a" style="left:505px;top:75px;width:137px;height:335px;background:#000;border:1px solid #5d6167;border-bottom-color:#000"></div>
<div class="a" style="left:642px;top:75px;width:2px;height:352px;background:#d4d8de"></div>
<div class="a" style="left:644px;top:75px;width:91px;height:335px;background:#000;border:1px solid #5d6167;border-bottom-color:#000"></div>
<div class="a" style="left:735px;top:75px;width:3px;height:352px;background:#d4d8de"></div>
<div class="a" style="left:738px;top:76px;width:684px;height:334px;background:#000"></div>
<div class="a" style="left:506px;top:108px;width:135px;height:2px;background:#70757c"></div><div class="a" style="left:645px;top:108px;width:89px;height:2px;background:#70757c"></div>
<div class="a" style="left:507px;top:111px;width:133px;height:20px;background:linear-gradient(#fff 45%,#efefef);border-bottom:1px solid #c8c8c8"></div>
<div class="a" style="left:646px;top:111px;width:87px;height:20px;background:linear-gradient(#fff 45%,#efefef);border-bottom:1px solid #c8c8c8"></div>
<div class="a ui" style="left:515px;top:113px;font-size:13px;font-weight:bold;letter-spacing:0.27px;">Name</div>
<div class="a ui" style="left:655px;top:113px;font-size:13px;font-weight:bold;letter-spacing:0.17px;">Value</div>
<div class="a" style="left:527px;top:132px;width:113px;height:20px;background:#f5f5f8"></div><div class="a" style="left:646px;top:132px;width:87px;height:20px;background:#f5f5f8"></div>
<div class="a ui" style="left:552px;top:134px;font-size:12px;letter-spacing:-0.15px;width:88px;overflow:hidden;">data_out[15:0]</div>
<div class="a wv" style="left:650px;top:136px;color:#000;width:84px">03fc</div>
<svg class="a" style="left:512px;top:138px" width="10" height="11" viewBox="0 0 10 11"><path d="M0.5,0.5v10l8.5,-5z" fill="#f0f0f0"/><path d="M0.5,0.5v10l8.5,-5z" fill="none" stroke="#a0a0a0" stroke-width=".5"/></svg>
<svg class="a" style="left:530px;top:134px" width="16" height="16" viewBox="0 0 16 16"><path d="M0.5,2.5h6.5l2.5,3.5 3.5,-4.5h2.5v9h-15z" fill="#4a9ae8" stroke="#2a6ac0" stroke-width=".7"/><path d="M0.8,2.8h6l2.7,3.7-9,0z" fill="#a8d4ff" opacity=".7"/><circle cx="11.5" cy="11.5" r="4" fill="#5a8cd8" stroke="#2a58a8" stroke-width=".8"/><circle cx="11.5" cy="11.5" r="1.3" fill="#222"/></svg>
<div class="a ui" style="left:552px;top:154px;font-size:12px;color:#fff;letter-spacing:0.18px;width:88px;overflow:hidden;">clk</div>
<div class="a wv" style="left:650px;top:156px;color:#fff;width:84px">1</div>
<svg class="a" style="left:529px;top:154px" width="15" height="16" viewBox="0 0 16 16"><path d="M1,1.5h3.5v10.5h3.5v-10.5h3v7" fill="none" stroke="#5aa844" stroke-width="1.1"/><circle cx="11.5" cy="11.5" r="4" fill="#f8c828" stroke="#a87808" stroke-width=".8"/><text x="11.5" y="14" text-anchor="middle" font-family="Liberation Sans,sans-serif" font-size="6.5" font-weight="bold" fill="#6a4a00">U</text></svg>
<div class="a ui" style="left:552px;top:174px;font-size:12px;color:#fff;letter-spacing:-0.30px;width:88px;overflow:hidden;">reset</div>
<div class="a wv" style="left:650px;top:176px;color:#fff;width:84px">1</div>
<svg class="a" style="left:529px;top:174px" width="15" height="16" viewBox="0 0 16 16"><path d="M1,1.5h3.5v10.5h3.5v-10.5h3v7" fill="none" stroke="#5aa844" stroke-width="1.1"/><circle cx="11.5" cy="11.5" r="4" fill="#f8c828" stroke="#a87808" stroke-width=".8"/><text x="11.5" y="14" text-anchor="middle" font-family="Liberation Sans,sans-serif" font-size="6.5" font-weight="bold" fill="#6a4a00">U</text></svg>
<div class="a ui" style="left:552px;top:194px;font-size:12px;color:#fff;letter-spacing:-0.20px;width:88px;overflow:hidden;">data_in[15:0]</div>
<div class="a wv" style="left:650px;top:196px;color:#fff;width:84px">03fc</div>
<svg class="a" style="left:512px;top:198px" width="10" height="11" viewBox="0 0 10 11"><path d="M0.5,0.5v10l8.5,-5z" fill="#f0f0f0"/><path d="M0.5,0.5v10l8.5,-5z" fill="none" stroke="#a0a0a0" stroke-width=".5"/></svg>
<svg class="a" style="left:530px;top:194px" width="16" height="16" viewBox="0 0 16 16"><path d="M0.5,2.5h6.5l2.5,3.5 3.5,-4.5h2.5v9h-15z" fill="#4a9ae8" stroke="#2a6ac0" stroke-width=".7"/><path d="M0.8,2.8h6l2.7,3.7-9,0z" fill="#a8d4ff" opacity=".7"/><circle cx="11.5" cy="11.5" r="4" fill="#f8c828" stroke="#a87808" stroke-width=".8"/><text x="11.5" y="14" text-anchor="middle" font-family="Liberation Sans,sans-serif" font-size="6.5" font-weight="bold" fill="#6a4a00">U</text></svg>
<div class="a ui" style="left:552px;top:214px;font-size:12px;color:#fff;letter-spacing:-0.17px;width:88px;overflow:hidden;">i[19:0]</div>
<div class="a wv" style="left:650px;top:216px;color:#fff;width:84px">00000000010000000000</div>
<svg class="a" style="left:512px;top:218px" width="10" height="11" viewBox="0 0 10 11"><path d="M0.5,0.5v10l8.5,-5z" fill="#f0f0f0"/><path d="M0.5,0.5v10l8.5,-5z" fill="none" stroke="#a0a0a0" stroke-width=".5"/></svg>
<svg class="a" style="left:530px;top:214px" width="16" height="16" viewBox="0 0 16 16"><path d="M0.5,2.5h6.5l2.5,3.5 3.5,-4.5h2.5v9h-15z" fill="#4a9ae8" stroke="#2a6ac0" stroke-width=".7"/><path d="M0.8,2.8h6l2.7,3.7-9,0z" fill="#a8d4ff" opacity=".7"/><circle cx="11.5" cy="11.5" r="4" fill="#f8c828" stroke="#a87808" stroke-width=".8"/><text x="11.5" y="14" text-anchor="middle" font-family="Liberation Sans,sans-serif" font-size="6.5" font-weight="bold" fill="#6a4a00">U</text></svg>
<div class="a ui" style="left:552px;top:234px;font-size:12px;color:#fff;letter-spacing:0.04px;width:88px;overflow:hidden;">j[19:0]</div>
<div class="a wv" style="left:650px;top:236px;color:#fff;width:84px">239</div>
<svg class="a" style="left:512px;top:238px" width="10" height="11" viewBox="0 0 10 11"><path d="M0.5,0.5v10l8.5,-5z" fill="#f0f0f0"/><path d="M0.5,0.5v10l8.5,-5z" fill="none" stroke="#a0a0a0" stroke-width=".5"/></svg>
<svg class="a" style="left:530px;top:234px" width="16" height="16" viewBox="0 0 16 16"><path d="M0.5,2.5h6.5l2.5,3.5 3.5,-4.5h2.5v9h-15z" fill="#4a9ae8" stroke="#2a6ac0" stroke-width=".7"/><path d="M0.8,2.8h6l2.7,3.7-9,0z" fill="#a8d4ff" opacity=".7"/><circle cx="11.5" cy="11.5" r="4" fill="#f8c828" stroke="#a87808" stroke-width=".8"/><text x="11.5" y="14" text-anchor="middle" font-family="Liberation Sans,sans-serif" font-size="6.5" font-weight="bold" fill="#6a4a00">U</text></svg>
<div class="a ui" style="left:552px;top:254px;font-size:12px;color:#fff;letter-spacing:-0.42px;width:88px;overflow:hidden;">mem[0:1023,15:0]</div>
<div class="a wv" style="left:650px;top:256px;color:#fff;width:84px">[0200,0203,0206</div>
<svg class="a" style="left:512px;top:258px" width="10" height="11" viewBox="0 0 10 11"><path d="M0.5,0.5v10l8.5,-5z" fill="#f0f0f0"/><path d="M0.5,0.5v10l8.5,-5z" fill="none" stroke="#a0a0a0" stroke-width=".5"/></svg>
<svg class="a" style="left:530px;top:254px" width="16" height="16" viewBox="0 0 16 16"><path d="M0.5,2.5h6.5l2.5,3.5 3.5,-4.5h2.5v9h-15z" fill="#4a9ae8" stroke="#2a6ac0" stroke-width=".7"/><path d="M0.8,2.8h6l2.7,3.7-9,0z" fill="#a8d4ff" opacity=".7"/><circle cx="11.5" cy="11.5" r="4" fill="#f8c828" stroke="#a87808" stroke-width=".8"/><text x="11.5" y="14" text-anchor="middle" font-family="Liberation Sans,sans-serif" font-size="6.5" font-weight="bold" fill="#6a4a00">U</text></svg>
<div class="a" style="left:506px;top:370px;width:135px;height:2px;background:#70757c"></div><div class="a" style="left:645px;top:370px;width:89px;height:2px;background:#70757c"></div>
<svg class="a" style="left:739px;top:75px" width="683" height="335" viewBox="739 75 683 335" shape-rendering="crispEdges">
<path d="M741,150L767,150L775,136L807,136L815,150L847,150L855,136L907,136L915,150L987,150L995,136L1087,136L1095,150L1387,150L1395,136L1419,136" fill="none" stroke="#00ff00" stroke-width="2" shape-rendering="auto"/>
<path d="M741,136L767,136L775,150L807,150L815,136L847,136L855,150L907,150L915,136L987,136L995,150L1087,150L1095,136L1387,136L1395,150L1419,150" fill="none" stroke="#00ff00" stroke-width="2" shape-rendering="auto"/>
<rect x="741" y="170.5" width="678" height=".5" fill="#004400"/>
<rect x="751.5" y="156.5" width="10" height="14.5" fill="#004400"/>
<rect x="771.5" y="156.5" width="10" height="14.5" fill="#004400"/>
<rect x="791.5" y="156.5" width="10" height="14.5" fill="#004400"/>
<rect x="811.5" y="156.5" width="10" height="14.5" fill="#004400"/>
<rect x="831.5" y="156.5" width="10" height="14.5" fill="#004400"/>
<rect x="851.5" y="156.5" width="10" height="14.5" fill="#004400"/>
<rect x="871.5" y="156.5" width="10" height="14.5" fill="#004400"/>
<rect x="891.5" y="156.5" width="10" height="14.5" fill="#004400"/>
<rect x="911.5" y="156.5" width="10" height="14.5" fill="#004400"/>
<rect x="931.5" y="156.5" width="10" height="14.5" fill="#004400"/>
<rect x="951.5" y="156.5" width="10" height="14.5" fill="#004400"/>
<rect x="971.5" y="156.5" width="10" height="14.5" fill="#004400"/>
<rect x="991.5" y="156.5" width="10" height="14.5" fill="#004400"/>
<rect x="1011.5" y="156.5" width="10" height="14.5" fill="#004400"/>
<rect x="1031.5" y="156.5" width="10" height="14.5" fill="#004400"/>
<rect x="1051.5" y="156.5" width="10" height="14.5" fill="#004400"/>
<rect x="1071.5" y="156.5" width="10" height="14.5" fill="#004400"/>
<rect x="1091.5" y="156.5" width="10" height="14.5" fill="#004400"/>
<rect x="1111.5" y="156.5" width="10" height="14.5" fill="#004400"/>
<rect x="1131.5" y="156.5" width="10" height="14.5" fill="#004400"/>
<rect x="1151.5" y="156.5" width="10" height="14.5" fill="#004400"/>
<rect x="1171.5" y="156.5" width="10" height="14.5" fill="#004400"/>
<rect x="1191.5" y="156.5" width="10" height="14.5" fill="#004400"/>
<rect x="1211.5" y="156.5" width="10" height="14.5" fill="#004400"/>
<rect x="1231.5" y="156.5" width="10" height="14.5" fill="#004400"/>
<rect x="1251.5" y="156.5" width="10" height="14.5" fill="#004400"/>
<rect x="1271.5" y="156.5" width="10" height="14.5" fill="#004400"/>
<rect x="1291.5" y="156.5" width="10" height="14.5" fill="#004400"/>
<rect x="1311.5" y="156.5" width="10" height="14.5" fill="#004400"/>
<rect x="1331.5" y="156.5" width="10" height="14.5" fill="#004400"/>
<rect x="1351.5" y="156.5" width="10" height="14.5" fill="#004400"/>
<rect x="1371.5" y="156.5" width="10" height="14.5" fill="#004400"/>
<rect x="1391.5" y="156.5" width="10" height="14.5" fill="#004400"/>
<rect x="1411.5" y="156.5" width="8" height="14.5" fill="#004400"/>
<path d="M741,170.5L751.5,170.5L751.5,156.5L761.5,156.5L761.5,170.5L771.5,170.5L771.5,156.5L781.5,156.5L781.5,170.5L791.5,170.5L791.5,156.5L801.5,156.5L801.5,170.5L811.5,170.5L811.5,156.5L821.5,156.5L821.5,170.5L831.5,170.5L831.5,156.5L841.5,156.5L841.5,170.5L851.5,170.5L851.5,156.5L861.5,156.5L861.5,170.5L871.5,170.5L871.5,156.5L881.5,156.5L881.5,170.5L891.5,170.5L891.5,156.5L901.5,156.5L901.5,170.5L911.5,170.5L911.5,156.5L921.5,156.5L921.5,170.5L931.5,170.5L931.5,156.5L941.5,156.5L941.5,170.5L951.5,170.5L951.5,156.5L961.5,156.5L961.5,170.5L971.5,170.5L971.5,156.5L981.5,156.5L981.5,170.5L991.5,170.5L991.5,156.5L1001.5,156.5L1001.5,170.5L1011.5,170.5L1011.5,156.5L1021.5,156.5L1021.5,170.5L1031.5,170.5L1031.5,156.5L1041.5,156.5L1041.5,170.5L1051.5,170.5L1051.5,156.5L1061.5,156.5L1061.5,170.5L1071.5,170.5L1071.5,156.5L1081.5,156.5L1081.5,170.5L1091.5,170.5L1091.5,156.5L1101.5,156.5L1101.5,170.5L1111.5,170.5L1111.5,156.5L1121.5,156.5L1121.5,170.5L1131.5,170.5L1131.5,156.5L1141.5,156.5L1141.5,170.5L1151.5,170.5L1151.5,156.5L1161.5,156.5L1161.5,170.5L1171.5,170.5L1171.5,156.5L1181.5,156.5L1181.5,170.5L1191.5,170.5L1191.5,156.5L1201.5,156.5L1201.5,170.5L1211.5,170.5L1211.5,156.5L1221.5,156.5L1221.5,170.5L1231.5,170.5L1231.5,156.5L1241.5,156.5L1241.5,170.5L1251.5,170.5L1251.5,156.5L1261.5,156.5L1261.5,170.5L1271.5,170.5L1271.5,156.5L1281.5,156.5L1281.5,170.5L1291.5,170.5L1291.5,156.5L1301.5,156.5L1301.5,170.5L1311.5,170.5L1311.5,156.5L1321.5,156.5L1321.5,170.5L1331.5,170.5L1331.5,156.5L1341.5,156.5L1341.5,170.5L1351.5,170.5L1351.5,156.5L1361.5,156.5L1361.5,170.5L1371.5,170.5L1371.5,156.5L1381.5,156.5L1381.5,170.5L1391.5,170.5L1391.5,156.5L1401.5,156.5L1401.5,170.5L1411.5,170.5L1411.5,156.5L1419.5,156.5" fill="none" stroke="#00ff00" stroke-width="1"/>
<rect x="741" y="176.5" width="678" height="14.5" fill="#004400"/>
<path d="M741,176.5H1419" stroke="#00ff00" stroke-width="1"/>
<path d="M741,210.5L747.5,210.5L754.5,196.5L787.5,196.5L794.5,210.5L827.5,210.5L834.5,196.5L887.5,196.5L894.5,210.5L967.5,210.5L974.5,196.5L1067.5,196.5L1074.5,210.5L1367.5,210.5L1374.5,196.5L1419,196.5" fill="none" stroke="#00ff00" stroke-width="1" shape-rendering="auto"/>
<path d="M741,196.5L747.5,196.5L754.5,210.5L787.5,210.5L794.5,196.5L827.5,196.5L834.5,210.5L887.5,210.5L894.5,196.5L967.5,196.5L974.5,210.5L1067.5,210.5L1074.5,196.5L1367.5,196.5L1374.5,210.5L1419,210.5" fill="none" stroke="#00ff00" stroke-width="1" shape-rendering="auto"/>
<path d="M741,216.5L1419,216.5" fill="none" stroke="#00ff00" stroke-width="1" shape-rendering="auto"/>
<path d="M741,230.5L1419,230.5" fill="none" stroke="#00ff00" stroke-width="1" shape-rendering="auto"/>
<path d="M741,236.5L747.5,236.5L754.5,250.5L767.5,250.5L774.5,236.5L787.5,236.5L794.5,250.5L807.5,250.5L814.5,236.5L827.5,236.5L834.5,250.5L847.5,250.5L854.5,236.5L867.5,236.5L874.5,250.5L887.5,250.5L894.5,236.5L907.5,236.5L914.5,250.5L927.5,250.5L934.5,236.5L947.5,236.5L954.5,250.5L967.5,250.5L974.5,236.5L987.5,236.5L994.5,250.5L1007.5,250.5L1014.5,236.5L1027.5,236.5L1034.5,250.5L1047.5,250.5L1054.5,236.5L1067.5,236.5L1074.5,250.5L1087.5,250.5L1094.5,236.5L1107.5,236.5L1114.5,250.5L1127.5,250.5L1134.5,236.5L1147.5,236.5L1154.5,250.5L1167.5,250.5L1174.5,236.5L1187.5,236.5L1194.5,250.5L1207.5,250.5L1214.5,236.5L1227.5,236.5L1234.5,250.5L1247.5,250.5L1254.5,236.5L1267.5,236.5L1274.5,250.5L1287.5,250.5L1294.5,236.5L1307.5,236.5L1314.5,250.5L1327.5,250.5L1334.5,236.5L1347.5,236.5L1354.5,250.5L1367.5,250.5L1374.5,236.5L1387.5,236.5L1394.5,250.5L1407.5,250.5L1414.5,236.5L1419,236.5" fill="none" stroke="#00ff00" stroke-width="1" shape-rendering="auto"/>
<path d="M741,250.5L747.5,250.5L754.5,236.5L767.5,236.5L774.5,250.5L787.5,250.5L794.5,236.5L807.5,236.5L814.5,250.5L827.5,250.5L834.5,236.5L847.5,236.5L854.5,250.5L867.5,250.5L874.5,236.5L887.5,236.5L894.5,250.5L907.5,250.5L914.5,236.5L927.5,236.5L934.5,250.5L947.5,250.5L954.5,236.5L967.5,236.5L974.5,250.5L987.5,250.5L994.5,236.5L1007.5,236.5L1014.5,250.5L1027.5,250.5L1034.5,236.5L1047.5,236.5L1054.5,250.5L1067.5,250.5L1074.5,236.5L1087.5,236.5L1094.5,250.5L1107.5,250.5L1114.5,236.5L1127.5,236.5L1134.5,250.5L1147.5,250.5L1154.5,236.5L1167.5,236.5L1174.5,250.5L1187.5,250.5L1194.5,236.5L1207.5,236.5L1214.5,250.5L1227.5,250.5L1234.5,236.5L1247.5,236.5L1254.5,250.5L1267.5,250.5L1274.5,236.5L1287.5,236.5L1294.5,250.5L1307.5,250.5L1314.5,236.5L1327.5,236.5L1334.5,250.5L1347.5,250.5L1354.5,236.5L1367.5,236.5L1374.5,250.5L1387.5,250.5L1394.5,236.5L1407.5,236.5L1414.5,250.5L1419,250.5" fill="none" stroke="#00ff00" stroke-width="1" shape-rendering="auto"/>
<path d="M741,256.5L1419,256.5" fill="none" stroke="#00ff00" stroke-width="1" shape-rendering="auto"/>
<path d="M741,270.5L1419,270.5" fill="none" stroke="#00ff00" stroke-width="1" shape-rendering="auto"/>
<path d="M741.5,116V370" stroke="#d0d0d0" stroke-width="1"/>
<path d="M841.5,116V370" stroke="#d0d0d0" stroke-width="1"/>
<path d="M941.5,116V370" stroke="#d0d0d0" stroke-width="1"/>
<path d="M1041.5,116V370" stroke="#d0d0d0" stroke-width="1"/>
<path d="M1141.5,116V370" stroke="#d0d0d0" stroke-width="1"/>
<path d="M1241.5,116V370" stroke="#d0d0d0" stroke-width="1"/>
<path d="M1341.5,116V370" stroke="#d0d0d0" stroke-width="1"/>
<path d="M741,370.5H1419" stroke="#e0e0e0" stroke-width="1"/>
<path d="M741,132.5H1419" stroke="#f0f0f0" stroke-width="1"/>
<path d="M751.5,128V132M761.5,128V132M771.5,128V132M781.5,128V132M791.5,124V132M801.5,128V132M811.5,128V132M821.5,128V132M831.5,128V132M851.5,128V132M861.5,128V132M871.5,128V132M881.5,128V132M891.5,124V132M901.5,128V132M911.5,128V132M921.5,128V132M931.5,128V132M951.5,128V132M961.5,128V132M971.5,128V132M981.5,128V132M991.5,124V132M1001.5,128V132M1011.5,128V132M1021.5,128V132M1031.5,128V132M1051.5,128V132M1061.5,128V132M1071.5,128V132M1081.5,128V132M1091.5,124V132M1101.5,128V132M1111.5,128V132M1121.5,128V132M1131.5,128V132M1151.5,128V132M1161.5,128V132M1171.5,128V132M1181.5,128V132M1191.5,124V132M1201.5,128V132M1211.5,128V132M1221.5,128V132M1231.5,128V132M1251.5,128V132M1261.5,128V132M1271.5,128V132M1281.5,128V132M1291.5,124V132M1301.5,128V132M1311.5,128V132M1321.5,128V132M1331.5,128V132M1351.5,128V132M1361.5,128V132M1371.5,128V132M1381.5,128V132M1391.5,124V132M1401.5,128V132M1411.5,128V132" stroke="#f0f0f0" stroke-width="1"/>
<text x="743" y="124" font-family="Liberation Mono,monospace" font-size="10.5" letter-spacing="-0.3" fill="#fff" shape-rendering="auto" >66,200 ns</text>
<text x="843" y="124" font-family="Liberation Mono,monospace" font-size="10.5" letter-spacing="-0.3" fill="#fff" shape-rendering="auto" >66,300 ns</text>
<text x="943" y="124" font-family="Liberation Mono,monospace" font-size="10.5" letter-spacing="-0.3" fill="#fff" shape-rendering="auto" >66,400 ns</text>
<text x="1043" y="124" font-family="Liberation Mono,monospace" font-size="10.5" letter-spacing="-0.3" fill="#fff" shape-rendering="auto" >66,500 ns</text>
<text x="1143" y="124" font-family="Liberation Mono,monospace" font-size="10.5" letter-spacing="-0.3" fill="#fff" shape-rendering="auto" >66,600 ns</text>
<text x="1243" y="124" font-family="Liberation Mono,monospace" font-size="10.5" letter-spacing="-0.3" fill="#fff" shape-rendering="auto" >66,700 ns</text>
<text x="1343" y="124" font-family="Liberation Mono,monospace" font-size="10.5" letter-spacing="-0.3" fill="#fff" shape-rendering="auto" >66,800 ns</text>
<text x="743" y="146" font-family="Liberation Mono,monospace" font-size="10.5" letter-spacing="-0.3" fill="#fff" shape-rendering="auto" >0<tspan lang="zh-CN" font-family="WenQuanYi Zen Hei,Noto Sans CJK SC,sans-serif" font-size="11" font-weight="bold" letter-spacing="0" stroke="#fff" stroke-width=".55">…</tspan></text>
<text x="779" y="146" font-family="Liberation Mono,monospace" font-size="10.5" letter-spacing="-0.3" fill="#fff" shape-rendering="auto" >03fa</text>
<text x="819" y="146" font-family="Liberation Mono,monospace" font-size="10.5" letter-spacing="-0.3" fill="#fff" shape-rendering="auto" >03fb</text>
<text x="869" y="146" font-family="Liberation Mono,monospace" font-size="10.5" letter-spacing="-0.3" fill="#fff" shape-rendering="auto" >03fc</text>
<text x="939" y="146" font-family="Liberation Mono,monospace" font-size="10.5" letter-spacing="-0.3" fill="#fff" shape-rendering="auto" >03fd</text>
<text x="1029" y="146" font-family="Liberation Mono,monospace" font-size="10.5" letter-spacing="-0.3" fill="#fff" shape-rendering="auto" >03fe</text>
<text x="1229" y="146" font-family="Liberation Mono,monospace" font-size="10.5" letter-spacing="-0.3" fill="#fff" shape-rendering="auto" >03ff</text>
<text x="1396" y="146" font-family="Liberation Mono,monospace" font-size="10.5" letter-spacing="-0.3" fill="#fff" shape-rendering="auto" >0<tspan lang="zh-CN" font-family="WenQuanYi Zen Hei,Noto Sans CJK SC,sans-serif" font-size="11" font-weight="bold" letter-spacing="0" stroke="#fff" stroke-width=".55">…</tspan></text>
<text x="759" y="206" font-family="Liberation Mono,monospace" font-size="10.5" letter-spacing="-0.3" fill="#fff" shape-rendering="auto" >03fa</text>
<text x="799" y="206" font-family="Liberation Mono,monospace" font-size="10.5" letter-spacing="-0.3" fill="#fff" shape-rendering="auto" >03fb</text>
<text x="849" y="206" font-family="Liberation Mono,monospace" font-size="10.5" letter-spacing="-0.3" fill="#fff" shape-rendering="auto" >03fc</text>
<text x="919" y="206" font-family="Liberation Mono,monospace" font-size="10.5" letter-spacing="-0.3" fill="#fff" shape-rendering="auto" >03fd</text>
<text x="1009" y="206" font-family="Liberation Mono,monospace" font-size="10.5" letter-spacing="-0.3" fill="#fff" shape-rendering="auto" >03fe</text>
<text x="1209" y="206" font-family="Liberation Mono,monospace" font-size="10.5" letter-spacing="-0.3" fill="#fff" shape-rendering="auto" >03ff</text>
<text x="1384" y="206" font-family="Liberation Mono,monospace" font-size="10.5" letter-spacing="-0.3" fill="#fff" shape-rendering="auto" >03fe</text>
<text x="1020" y="226" font-family="Liberation Mono,monospace" font-size="10.5" letter-spacing="-0.3" fill="#fff" shape-rendering="auto" >00000000010000000000</text>
<text x="755.5" y="246" lang="zh-CN" font-family="WenQuanYi Zen Hei,Noto Sans CJK SC,sans-serif" font-size="11" font-weight="bold" fill="#fff" stroke="#fff" stroke-width=".55" shape-rendering="auto">…</text>
<text x="775.5" y="246" lang="zh-CN" font-family="WenQuanYi Zen Hei,Noto Sans CJK SC,sans-serif" font-size="11" font-weight="bold" fill="#fff" stroke="#fff" stroke-width=".55" shape-rendering="auto">…</text>
<text x="795.5" y="246" lang="zh-CN" font-family="WenQuanYi Zen Hei,Noto Sans CJK SC,sans-serif" font-size="11" font-weight="bold" fill="#fff" stroke="#fff" stroke-width=".55" shape-rendering="auto">…</text>
<text x="815.5" y="246" lang="zh-CN" font-family="WenQuanYi Zen Hei,Noto Sans CJK SC,sans-serif" font-size="11" font-weight="bold" fill="#fff" stroke="#fff" stroke-width=".55" shape-rendering="auto">…</text>
<text x="835.5" y="246" lang="zh-CN" font-family="WenQuanYi Zen Hei,Noto Sans CJK SC,sans-serif" font-size="11" font-weight="bold" fill="#fff" stroke="#fff" stroke-width=".55" shape-rendering="auto">…</text>
<text x="855.5" y="246" lang="zh-CN" font-family="WenQuanYi Zen Hei,Noto Sans CJK SC,sans-serif" font-size="11" font-weight="bold" fill="#fff" stroke="#fff" stroke-width=".55" shape-rendering="auto">…</text>
<text x="875.5" y="246" lang="zh-CN" font-family="WenQuanYi Zen Hei,Noto Sans CJK SC,sans-serif" font-size="11" font-weight="bold" fill="#fff" stroke="#fff" stroke-width=".55" shape-rendering="auto">…</text>
<text x="895.5" y="246" lang="zh-CN" font-family="WenQuanYi Zen Hei,Noto Sans CJK SC,sans-serif" font-size="11" font-weight="bold" fill="#fff" stroke="#fff" stroke-width=".55" shape-rendering="auto">…</text>
<text x="915.5" y="246" lang="zh-CN" font-family="WenQuanYi Zen Hei,Noto Sans CJK SC,sans-serif" font-size="11" font-weight="bold" fill="#fff" stroke="#fff" stroke-width=".55" shape-rendering="auto">…</text>
<text x="935.5" y="246" lang="zh-CN" font-family="WenQuanYi Zen Hei,Noto Sans CJK SC,sans-serif" font-size="11" font-weight="bold" fill="#fff" stroke="#fff" stroke-width=".55" shape-rendering="auto">…</text>
<text x="955.5" y="246" lang="zh-CN" font-family="WenQuanYi Zen Hei,Noto Sans CJK SC,sans-serif" font-size="11" font-weight="bold" fill="#fff" stroke="#fff" stroke-width=".55" shape-rendering="auto">…</text>
<text x="975.5" y="246" lang="zh-CN" font-family="WenQuanYi Zen Hei,Noto Sans CJK SC,sans-serif" font-size="11" font-weight="bold" fill="#fff" stroke="#fff" stroke-width=".55" shape-rendering="auto">…</text>
<text x="995.5" y="246" lang="zh-CN" font-family="WenQuanYi Zen Hei,Noto Sans CJK SC,sans-serif" font-size="11" font-weight="bold" fill="#fff" stroke="#fff" stroke-width=".55" shape-rendering="auto">…</text>
<text x="1015.5" y="246" lang="zh-CN" font-family="WenQuanYi Zen Hei,Noto Sans CJK SC,sans-serif" font-size="11" font-weight="bold" fill="#fff" stroke="#fff" stroke-width=".55" shape-rendering="auto">…</text>
<text x="1035.5" y="246" lang="zh-CN" font-family="WenQuanYi Zen Hei,Noto Sans CJK SC,sans-serif" font-size="11" font-weight="bold" fill="#fff" stroke="#fff" stroke-width=".55" shape-rendering="auto">…</text>
<text x="1055.5" y="246" lang="zh-CN" font-family="WenQuanYi Zen Hei,Noto Sans CJK SC,sans-serif" font-size="11" font-weight="bold" fill="#fff" stroke="#fff" stroke-width=".55" shape-rendering="auto">…</text>
<text x="1075.5" y="246" lang="zh-CN" font-family="WenQuanYi Zen Hei,Noto Sans CJK SC,sans-serif" font-size="11" font-weight="bold" fill="#fff" stroke="#fff" stroke-width=".55" shape-rendering="auto">…</text>
<text x="1095.5" y="246" lang="zh-CN" font-family="WenQuanYi Zen Hei,Noto Sans CJK SC,sans-serif" font-size="11" font-weight="bold" fill="#fff" stroke="#fff" stroke-width=".55" shape-rendering="auto">…</text>
<text x="1115.5" y="246" lang="zh-CN" font-family="WenQuanYi Zen Hei,Noto Sans CJK SC,sans-serif" font-size="11" font-weight="bold" fill="#fff" stroke="#fff" stroke-width=".55" shape-rendering="auto">…</text>
<text x="1135.5" y="246" lang="zh-CN" font-family="WenQuanYi Zen Hei,Noto Sans CJK SC,sans-serif" font-size="11" font-weight="bold" fill="#fff" stroke="#fff" stroke-width=".55" shape-rendering="auto">…</text>
<text x="1155.5" y="246" lang="zh-CN" font-family="WenQuanYi Zen Hei,Noto Sans CJK SC,sans-serif" font-size="11" font-weight="bold" fill="#fff" stroke="#fff" stroke-width=".55" shape-rendering="auto">…</text>
<text x="1175.5" y="246" lang="zh-CN" font-family="WenQuanYi Zen Hei,Noto Sans CJK SC,sans-serif" font-size="11" font-weight="bold" fill="#fff" stroke="#fff" stroke-width=".55" shape-rendering="auto">…</text>
<text x="1195.5" y="246" lang="zh-CN" font-family="WenQuanYi Zen Hei,Noto Sans CJK SC,sans-serif" font-size="11" font-weight="bold" fill="#fff" stroke="#fff" stroke-width=".55" shape-rendering="auto">…</text>
<text x="1215.5" y="246" lang="zh-CN" font-family="WenQuanYi Zen Hei,Noto Sans CJK SC,sans-serif" font-size="11" font-weight="bold" fill="#fff" stroke="#fff" stroke-width=".55" shape-rendering="auto">…</text>
<text x="1235.5" y="246" lang="zh-CN" font-family="WenQuanYi Zen Hei,Noto Sans CJK SC,sans-serif" font-size="11" font-weight="bold" fill="#fff" stroke="#fff" stroke-width=".55" shape-rendering="auto">…</text>
<text x="1255.5" y="246" lang="zh-CN" font-family="WenQuanYi Zen Hei,Noto Sans CJK SC,sans-serif" font-size="11" font-weight="bold" fill="#fff" stroke="#fff" stroke-width=".55" shape-rendering="auto">…</text>
<text x="1275.5" y="246" lang="zh-CN" font-family="WenQuanYi Zen Hei,Noto Sans CJK SC,sans-serif" font-size="11" font-weight="bold" fill="#fff" stroke="#fff" stroke-width=".55" shape-rendering="auto">…</text>
<text x="1295.5" y="246" lang="zh-CN" font-family="WenQuanYi Zen Hei,Noto Sans CJK SC,sans-serif" font-size="11" font-weight="bold" fill="#fff" stroke="#fff" stroke-width=".55" shape-rendering="auto">…</text>
<text x="1315.5" y="246" lang="zh-CN" font-family="WenQuanYi Zen Hei,Noto Sans CJK SC,sans-serif" font-size="11" font-weight="bold" fill="#fff" stroke="#fff" stroke-width=".55" shape-rendering="auto">…</text>
<text x="1335.5" y="246" lang="zh-CN" font-family="WenQuanYi Zen Hei,Noto Sans CJK SC,sans-serif" font-size="11" font-weight="bold" fill="#fff" stroke="#fff" stroke-width=".55" shape-rendering="auto">…</text>
<text x="1355.5" y="246" lang="zh-CN" font-family="WenQuanYi Zen Hei,Noto Sans CJK SC,sans-serif" font-size="11" font-weight="bold" fill="#fff" stroke="#fff" stroke-width=".55" shape-rendering="auto">…</text>
<text x="1375.5" y="246" lang="zh-CN" font-family="WenQuanYi Zen Hei,Noto Sans CJK SC,sans-serif" font-size="11" font-weight="bold" fill="#fff" stroke="#fff" stroke-width=".55" shape-rendering="auto">…</text>
<text x="1395.5" y="246" lang="zh-CN" font-family="WenQuanYi Zen Hei,Noto Sans CJK SC,sans-serif" font-size="11" font-weight="bold" fill="#fff" stroke="#fff" stroke-width=".55" shape-rendering="auto">…</text>
<text x="743" y="266" font-family="Liberation Mono,monospace" font-size="10.5" letter-spacing="-0.3" fill="#fff" shape-rendering="auto" >[0200,0203,0206,0209,020c,020f,0212,0215,0219,021c,021f,0222,0225,0228,022b,022f,0232,0235,0238,023b,023e,0241,</text>
<text x="1409" y="266" lang="zh-CN" font-family="WenQuanYi Zen Hei,Noto Sans CJK SC,sans-serif" font-size="11" font-weight="bold" fill="#fff" stroke="#fff" stroke-width=".55" shape-rendering="auto">…</text>
<rect x="853" y="92" width="2" height="278" fill="#ffff00"/>
<rect x="853.5" y="76.5" width="82" height="12" fill="#000" stroke="#e8e800" stroke-width="1"/>
<text x="855.5" y="85.5" font-family="Liberation Mono,monospace" font-size="10.5" letter-spacing="-0.3" fill="#ffff00" shape-rendering="auto">66,313.000 ns</text>
<text x="747" y="399" font-family="Liberation Mono,monospace" font-size="10.5" letter-spacing="-0.3" fill="#e8e8e8" shape-rendering="auto">X1: 66,313.000 ns</text>
<path fill="none" stroke="#e8252c" stroke-width="4" stroke-linecap="round" stroke-linejoin="round" shape-rendering="auto" d="M902.6,161.7 L932,161.7 C940,162.5 946,164.5 952.5,166.7 S966,172 972.7,175.4 S985,180 990,183.3 S997,188 1000,192 S1005,198 1007.4,203.6 S1011,211 1011,215 S1012,225 1011,229.6 S1010,237 1007.4,241 S1002,246 995.8,248.4 S986,252 978.5,254 S962,256 954,256 S935,256 925,255.6 S913,254.5 907.7,252.7 S898,249 893.2,245.5 S885,239 881.7,234 S877,226 876.6,221 S877,211 878.8,205 S883,195 886,189 S890,181 893.2,176 S899,167 902,163.5"/>
<path fill="none" stroke="#e8252c" stroke-width="4" stroke-linecap="round" stroke-linejoin="round" shape-rendering="auto" d="M894.7,176.8 C900,175 905,173.5 909,172.5 S924,171 932,171 S946,171.8 952.5,172.5 S964,174 970,175.4"/>
<path fill="none" stroke="#e8252c" stroke-width="4" stroke-linecap="round" stroke-linejoin="round" shape-rendering="auto" d="M1081,167.5 C1085,167 1089,167 1092.5,168 S1101,172 1105,173.8 S1114,177.5 1120,178 S1150,178.5 1165,178.5 H1317.5 C1325,179 1333,180 1340,181.3 S1357,183.5 1365,185 S1376,187.5 1380,190 S1385.8,195 1385.8,198.8 S1386.5,206 1385.8,210 S1384,216 1380,218.8 S1369,222 1362.5,223.8 S1353,225 1347.5,226.3 S1335,230 1327.5,231.3 S1302,232.5 1290,232.5 H1250 C1235,233.5 1218,235 1202.5,236.3 S1160,238.5 1140,238.8 S1108,239 1097.5,238 S1087,235.5 1082.5,232.5 S1073,226.5 1070,222.5 S1064.5,214 1063.8,210 S1062,200 1062.5,195 S1065,185 1067.5,180 S1072,174 1075,171.3 S1079,168 1081,167.5Z"/>
</svg>
<div class="a" style="left:506px;top:410px;width:916px;height:17px;background:#f0f0f0"></div>
<div class="a" style="left:642px;top:410px;width:2px;height:17px;background:#e4e6ea"></div><div class="a" style="left:735px;top:410px;width:3px;height:17px;background:#e4e6ea"></div>
<div class="a ar" style="left:511.0px;top:414.5px;border-right:4px solid #909090;border-top:4px solid transparent;border-bottom:4px solid transparent"></div>
<div class="a ar" style="left:631.0px;top:414.5px;border-left:4px solid #909090;border-top:4px solid transparent;border-bottom:4px solid transparent"></div>
<div class="a ar" style="left:650.0px;top:414.5px;border-right:4px solid #909090;border-top:4px solid transparent;border-bottom:4px solid transparent"></div>
<div class="a ar" style="left:724.0px;top:414.5px;border-left:4px solid #909090;border-top:4px solid transparent;border-bottom:4px solid transparent"></div>
<div class="a ar" style="left:744.0px;top:414.5px;border-right:4px solid #505050;border-top:4px solid transparent;border-bottom:4px solid transparent"></div>
<div class="a ar" style="left:1411.0px;top:414.5px;border-left:4px solid #505050;border-top:4px solid transparent;border-bottom:4px solid transparent"></div>
<div class="a thumb" style="left:759px;top:411px;width:8px;height:15px"></div>
<div class="a" style="left:1422px;top:75px;width:18px;height:352px;background:linear-gradient(90deg,#fbfbfb 0 2px,#ececec 2px 4px,#f1f1f1 4px)"></div>
<div class="a ar" style="left:1428.5px;top:82.0px;border-bottom:4px solid #8a8a8a;border-left:4px solid transparent;border-right:4px solid transparent"></div>
<div class="a ar" style="left:1428.5px;top:415.0px;border-top:4px solid #8a8a8a;border-left:4px solid transparent;border-right:4px solid transparent"></div>
<div class="a" style="left:479px;top:429px;width:479px;height:21px;background:linear-gradient(#ffffff,#f4f4f4);border:1px solid #d4d4d4;border-bottom:none"></div>
<div class="a" style="left:479px;top:449px;width:479px;height:2px;background:#3c8ad8"></div>
<div class="a" style="left:479px;top:451px;width:479px;height:2px;background-image:repeating-linear-gradient(90deg,#c8c8c8 0 2px,transparent 2px 4px)"></div>
<svg class="a" style="left:484px;top:432px" width="15" height="15" viewBox="0 0 15 15"><rect x="0.5" y="0.5" width="14" height="14" fill="#fff" stroke="#2a5ac8"/><rect x="0.5" y="0.5" width="14" height="3.5" fill="#1e4ab8"/><path d="M2,11.5h1.5v-3h2v3h2v-3h2v3h2v-3h1.5" fill="none" stroke="#2a5ac8" stroke-width="1.1"/></svg>
<div class="a sim" style="left:678px;top:435px;">Default.wcfg*</div>
<svg class="a" style="left:937px;top:433px" width="14" height="14" viewBox="0 0 14 14"><rect x="0.5" y="0.5" width="13" height="13" rx="2" fill="#e8583a" stroke="#b83218"/><path d="M4,4l6,6M10,4l-6,6" stroke="#fff" stroke-width="2"/></svg>
<div class="a" style="left:230px;top:201px;width:2px;height:130px;background-image:repeating-linear-gradient(#c2c2c2 0 2px,transparent 2px 5px)"></div>
<div class="a" style="left:475px;top:201px;width:2px;height:130px;background-image:repeating-linear-gradient(#c2c2c2 0 2px,transparent 2px 5px)"></div>
<div class="a box" style="left:0;top:458px;width:1440px;height:19px"></div>
<div class="a sim" style="left:3px;top:462px;">Console</div>
<svg class="a" style="left:1382px;top:462.5px" width="10" height="8.2" viewBox="0 0 11 9"><path d="M1,4.5h9" stroke="#000" stroke-width="1.3"/><path d="M0,4.5l3,-3v6zM11,4.5l-3,-3v6z" fill="#000"/></svg>
<svg class="a" style="left:1397px;top:462px" width="9" height="9" viewBox="0 0 10 10"><rect x="0.750" y="1.250" width="8.5" height="8" fill="none" stroke="#000" stroke-width="1.5"/><path d="M0,1h10" stroke="#000" stroke-width="2"/></svg>
<svg class="a" style="left:1413px;top:462px" width="8" height="9" viewBox="0 0 10 10"><path d="M3.2,3.5v-2h6v5.2h-2.2" fill="none" stroke="#000" stroke-width="1.5"/><path d="M2.4,1.5h7.6" stroke="#000" stroke-width="2.2"/><rect x="0.8" y="4.6" width="5.8" height="4.6" fill="#f0f0f0" stroke="#000" stroke-width="1.5"/><path d="M0,4.8h7.4" stroke="#000" stroke-width="2.2"/></svg>
<svg class="a" style="left:1428px;top:463px" width="8" height="7.5" viewBox="0 0 9.5 9.5"><path d="M1,1l7.5,7.5M8.5,1l-7.5,7.5" stroke="#000" stroke-width="1.7"/></svg>
<div class="a wh" style="left:0;top:479px;width:1440px;height:366px"></div>
<div class="a sim" style="left:4.5px;top:481px;line-height:13px">mem[    998] = 01ae
mem[    999] = 01b1
mem[   1000] = 01b4
mem[   1001] = 01b8
mem[   1002] = 01bb
mem[   1003] = 01be
mem[   1004] = 01c1
mem[   1005] = 01c4
mem[   1006] = 01c7
mem[   1007] = 01ca
mem[   1008] = 01cd
mem[   1009] = 01d0
mem[   1010] = 01d4
mem[   1011] = 01d7
mem[   1012] = 01da
mem[   1013] = 01dd
mem[   1014] = 01e0
mem[   1015] = 01e3
mem[   1016] = 01e6
mem[   1017] = 01ea
mem[   1018] = 01ed
mem[   1019] = 01f0
mem[   1020] = 01f3
mem[   1021] = 01f6
mem[   1022] = 01f9
mem[   1023] = 01fc
Finished circuit initialization process.
<b>ISim&gt;</b></div>
<div class="a" style="left:1423px;top:480px;width:16px;height:364px;background:#f0f0f0"></div>
<div class="a ar" style="left:1427.5px;top:487.0px;border-bottom:4px solid #505050;border-left:4px solid transparent;border-right:4px solid transparent"></div>
<div class="a ar" style="left:1427.5px;top:833.0px;border-top:4px solid #505050;border-left:4px solid transparent;border-right:4px solid transparent"></div>
<div class="a thumb" style="left:1424px;top:819px;width:14px;height:8px"></div>
<div class="a tab" style="left:86px;top:845px;width:130px"></div>
<div class="a tab" style="left:216px;top:845px;width:107px"></div>
<div class="a tab" style="left:323px;top:845px;width:168px"></div>
<div class="a tab" style="left:491px;top:845px;width:125px"></div>
<div class="a tabsel" style="left:0;top:845px;width:86px"></div>
<div class="a sim" style="left:32px;top:852px;">Console</div>
<div class="a sim" style="left:116px;top:851px;">Compilation Log</div>
<div class="a sim" style="left:248px;top:851px;">Breakpoints</div>
<div class="a sim" style="left:356px;top:851px;">Find in Files Results</div>
<div class="a sim" style="left:524px;top:851px;">Search Results</div>
<svg class="a" style="left:7px;top:851px" width="16" height="13" viewBox="0 0 16 13"><rect x="0.5" y="0.5" width="15" height="12" fill="#3a4a6a" stroke="#8aa0c8"/><rect x="1.5" y="1.5" width="13" height="10" fill="#2a3448"/><path d="M3,4l2,1.5-2,1.5M6,7.5h3" fill="none" stroke="#fff" stroke-width=".9"/></svg>
<svg class="a" style="left:90px;top:849px" width="16" height="15" viewBox="0 0 16 15"><rect x="0.5" y="0.5" width="15" height="14" fill="#fff" stroke="#6a8ac8"/><rect x="0.5" y="0.5" width="15" height="3" fill="#3a7ae0"/><path d="M2.5,6h11M2.5,8h11M2.5,10h11M2.5,12h11" stroke="#b0b0b0" stroke-dasharray="1,.6"/></svg>
<svg class="a" style="left:224px;top:849px" width="13" height="13" viewBox="0 0 13 13"><circle cx="6" cy="7" r="5.5" fill="#d81010"/><circle cx="4.5" cy="5.5" r="2.2" fill="#f86060" opacity=".7"/></svg>
<svg class="a" style="left:330px;top:848px" width="16" height="16" viewBox="0 0 16 16"><path d="M0.5,13.5V1.5h5l1.5,1.5h7v10.5z" fill="#f7d54a" stroke="#c79a18"/><path d="M0.5,13.5V4.5h14v9z" fill="#fbe680" stroke="#c79a18"/><g transform="translate(4.2,4.6) scale(0.72)"><path d="M1,15L3.5,4.5 5,2.5h1.5L7.5,6h1L9.5,2.5H11L12.5,4.5 15,15H9.5V10h-3v5z" fill="#2a2a2a"/><path d="M2.5,13.5L4.3,5.5M13.5,13.5L11.7,5.5" stroke="#9a9a9a" stroke-width="1.2"/></g></svg>
<svg class="a" style="left:498px;top:848px" width="16" height="16" viewBox="0 0 16 16"><rect x="0.5" y="0.5" width="10" height="13" fill="#fff" stroke="#6a8ac8"/><path d="M2,3h7M2,5.5h7M2,8h7" stroke="#8aa8e0"/><g transform="translate(4.8,5) scale(0.68)"><path d="M1,15L3.5,4.5 5,2.5h1.5L7.5,6h1L9.5,2.5H11L12.5,4.5 15,15H9.5V10h-3v5z" fill="#2a2a2a"/><path d="M2.5,13.5L4.3,5.5M13.5,13.5L11.7,5.5" stroke="#9a9a9a" stroke-width="1.2"/></g></svg>
<div class="a" style="left:1267px;top:872px;width:171px;height:25px;border:1px solid #bcbcbc;border-right-color:#fff;border-bottom-color:#fff"></div>
<div class="a ui" id="simtime" style="left:1271px;top:877px;font-size:13px;letter-spacing:-0.22px;">Sim Time: 10,000,000,000 ps</div>
</body></html>
